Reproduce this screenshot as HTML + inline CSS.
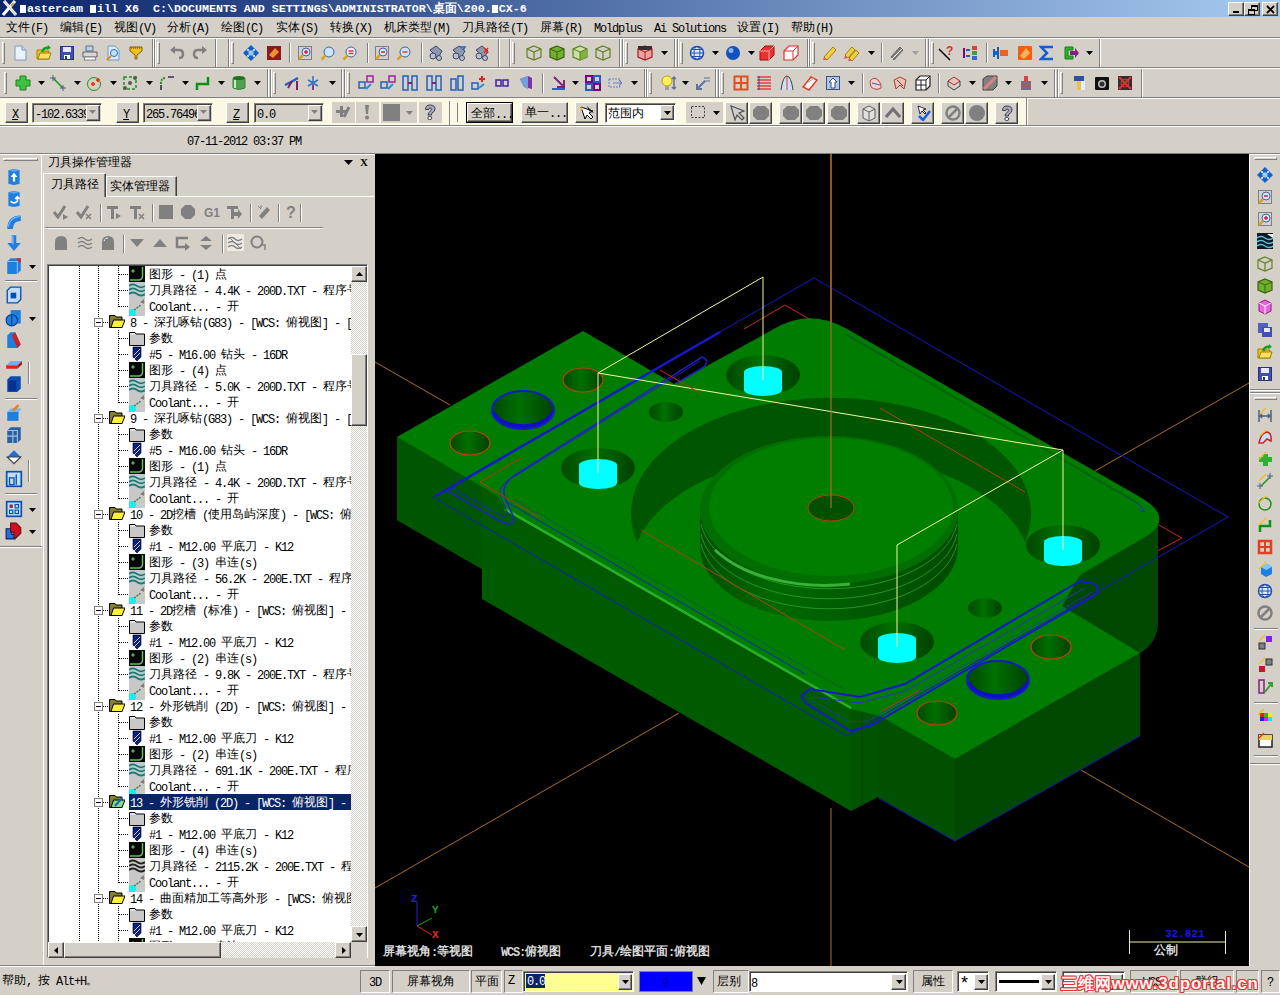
<!DOCTYPE html><html><head><meta charset="utf-8"><style>
*{margin:0;padding:0;box-sizing:border-box}
html,body{width:1280px;height:996px;overflow:hidden}
body{background:#D4D0C8;position:relative;font-family:"Liberation Sans",sans-serif;font-size:12px;color:#000}
.a{position:absolute}
.t{white-space:nowrap;line-height:16px;height:16px;font-size:12px}
.t .m{font-family:"Liberation Mono",monospace;font-size:12px;letter-spacing:-1.2px;position:relative;top:1px}
.t .c{font-family:"Liberation Sans",sans-serif;font-size:12px;letter-spacing:0}
.u{text-decoration:underline}
.tt{color:#fff;font:bold 11.67px/16px "Liberation Mono",monospace;white-space:nowrap}
.tt .c{font-size:12px;font-family:"Liberation Sans",sans-serif}
.mn{line-height:16px}
.ph{}
.vt{color:#D8D8D8;font-weight:bold}
.vtb{font:bold 11px/12px "Liberation Mono",monospace}
.wm{font:bold 17px/18px "Liberation Sans",sans-serif;color:#FFF4F4;letter-spacing:0.8px;white-space:nowrap;text-shadow:1px 0 #E03838,-1px 0 #E03838,0 1px #E03838,0 -1px #E03838,1px 1px #E03838,-1px -1px #E03838,1px -1px #E03838,-1px 1px #E03838}
</style></head><body><div class="a" style="left:0px;top:0px;width:1280px;height:17px;background:linear-gradient(to right,#0A246A,#A6CAF0)"></div><svg class="a" style="left:2px;top:0px;" width="16" height="16" viewBox="0 0 16 16"><path d="M2 1L14 15M13 1L1 15" stroke="#fff" stroke-width="3"/><path d="M2 1L14 15" stroke="#C0C0C0" stroke-width="1"/><path d="M9 6L12 3" stroke="#C0A040" stroke-width="2"/></svg><div class="a tt" style="left:20px;top:0px"><span style="display:inline-block;width:6px;height:8px;background:#fff;margin-right:1px;vertical-align:-1px"></span>astercam <span style="display:inline-block;width:6px;height:8px;background:#fff;margin-right:1px;vertical-align:-1px"></span>ill X6&#160;&#160;C:\DOCUMENTS AND SETTINGS\ADMINISTRATOR\<span class="c">桌面</span>\200.<span style="display:inline-block;width:6px;height:8px;background:#fff;margin-right:1px;vertical-align:-1px"></span>CX-6</div><div class="a" style="left:1228px;top:2px;width:16px;height:14px;background:#D4D0C8;border-top:1px solid #fff;border-left:1px solid #fff;border-right:1px solid #404040;border-bottom:1px solid #404040;box-shadow:inset -1px -1px 0 #808080"><svg class="a" style="left:4px;top:8px;" width="7" height="3" viewBox="0 0 7 3"><rect width="6" height="2" fill="#000"/></svg></div><div class="a" style="left:1244px;top:2px;width:16px;height:14px;background:#D4D0C8;border-top:1px solid #fff;border-left:1px solid #fff;border-right:1px solid #404040;border-bottom:1px solid #404040;box-shadow:inset -1px -1px 0 #808080"><svg class="a" style="left:3px;top:2px;" width="10" height="10" viewBox="0 0 10 10"><rect x="3.5" y="0.5" width="6" height="5" fill="none" stroke="#000"/><rect x="3" y="0" width="7" height="2" fill="#000"/><rect x="0.5" y="4.5" width="6" height="5" fill="#D4D0C8" stroke="#000"/><rect x="0" y="4" width="7" height="2" fill="#000"/></svg></div><div class="a" style="left:1262px;top:2px;width:16px;height:14px;background:#D4D0C8;border-top:1px solid #fff;border-left:1px solid #fff;border-right:1px solid #404040;border-bottom:1px solid #404040;box-shadow:inset -1px -1px 0 #808080"><svg class="a" style="left:3px;top:2px;" width="9" height="9" viewBox="0 0 9 9"><path d="M1 1L8 8M8 1L1 8" stroke="#000" stroke-width="1.8"/></svg></div><div class="a t mn" style="left:6px;top:19px;"><span class="c">文件</span><span class="m">(F)</span></div><div class="a t mn" style="left:60px;top:19px;"><span class="c">编辑</span><span class="m">(E)</span></div><div class="a t mn" style="left:114px;top:19px;"><span class="c">视图</span><span class="m">(V)</span></div><div class="a t mn" style="left:167px;top:19px;"><span class="c">分析</span><span class="m">(A)</span></div><div class="a t mn" style="left:221px;top:19px;"><span class="c">绘图</span><span class="m">(C)</span></div><div class="a t mn" style="left:276px;top:19px;"><span class="c">实体</span><span class="m">(S)</span></div><div class="a t mn" style="left:330px;top:19px;"><span class="c">转换</span><span class="m">(X)</span></div><div class="a t mn" style="left:384px;top:19px;"><span class="c">机床类型</span><span class="m">(M)</span></div><div class="a t mn" style="left:462px;top:19px;"><span class="c">刀具路径</span><span class="m">(T)</span></div><div class="a t mn" style="left:540px;top:19px;"><span class="c">屏幕</span><span class="m">(R)</span></div><div class="a t mn" style="left:594px;top:19px;"><span class="m">Moldplus</span></div><div class="a t mn" style="left:654px;top:19px;"><span class="m">Ai&#160;Solutions</span></div><div class="a t mn" style="left:737px;top:19px;"><span class="c">设置</span><span class="m">(I)</span></div><div class="a t mn" style="left:791px;top:19px;"><span class="c">帮助</span><span class="m">(H)</span></div><div class="a" style="left:0px;top:37px;width:1280px;height:1px;background:#808080"></div><div class="a" style="left:0px;top:38px;width:1280px;height:1px;background:#fff"></div><div class="a" style="left:0px;top:67px;width:1280px;height:1px;background:#808080"></div><div class="a" style="left:0px;top:68px;width:1280px;height:1px;background:#fff"></div><div class="a" style="left:0px;top:97px;width:1280px;height:1px;background:#808080"></div><div class="a" style="left:0px;top:98px;width:1280px;height:1px;background:#fff"></div><div class="a" style="left:152px;top:39px;width:1px;height:28px;background:#808080"></div><div class="a" style="left:153px;top:39px;width:1px;height:28px;background:#fff"></div><div class="a" style="left:2px;top:42px;width:3px;height:22px;border-left:1px solid #fff;border-top:1px solid #fff;border-right:1px solid #808080;border-bottom:1px solid #808080"></div><div class="a" style="left:215px;top:39px;width:1px;height:28px;background:#808080"></div><div class="a" style="left:216px;top:39px;width:1px;height:28px;background:#fff"></div><div class="a" style="left:154px;top:39px;width:1px;height:28px;background:#808080"></div><div class="a" style="left:155px;top:39px;width:1px;height:28px;background:#fff"></div><div class="a" style="left:157px;top:42px;width:3px;height:22px;border-left:1px solid #fff;border-top:1px solid #fff;border-right:1px solid #808080;border-bottom:1px solid #808080"></div><div class="a" style="left:498px;top:39px;width:1px;height:28px;background:#808080"></div><div class="a" style="left:499px;top:39px;width:1px;height:28px;background:#fff"></div><div class="a" style="left:228px;top:39px;width:1px;height:28px;background:#808080"></div><div class="a" style="left:229px;top:39px;width:1px;height:28px;background:#fff"></div><div class="a" style="left:231px;top:42px;width:3px;height:22px;border-left:1px solid #fff;border-top:1px solid #fff;border-right:1px solid #808080;border-bottom:1px solid #808080"></div><div class="a" style="left:619px;top:39px;width:1px;height:28px;background:#808080"></div><div class="a" style="left:620px;top:39px;width:1px;height:28px;background:#fff"></div><div class="a" style="left:509px;top:39px;width:1px;height:28px;background:#808080"></div><div class="a" style="left:510px;top:39px;width:1px;height:28px;background:#fff"></div><div class="a" style="left:512px;top:42px;width:3px;height:22px;border-left:1px solid #fff;border-top:1px solid #fff;border-right:1px solid #808080;border-bottom:1px solid #808080"></div><div class="a" style="left:674px;top:39px;width:1px;height:28px;background:#808080"></div><div class="a" style="left:675px;top:39px;width:1px;height:28px;background:#fff"></div><div class="a" style="left:622px;top:39px;width:1px;height:28px;background:#808080"></div><div class="a" style="left:623px;top:39px;width:1px;height:28px;background:#fff"></div><div class="a" style="left:625px;top:42px;width:3px;height:22px;border-left:1px solid #fff;border-top:1px solid #fff;border-right:1px solid #808080;border-bottom:1px solid #808080"></div><div class="a" style="left:807px;top:39px;width:1px;height:28px;background:#808080"></div><div class="a" style="left:808px;top:39px;width:1px;height:28px;background:#fff"></div><div class="a" style="left:677px;top:39px;width:1px;height:28px;background:#808080"></div><div class="a" style="left:678px;top:39px;width:1px;height:28px;background:#fff"></div><div class="a" style="left:680px;top:42px;width:3px;height:22px;border-left:1px solid #fff;border-top:1px solid #fff;border-right:1px solid #808080;border-bottom:1px solid #808080"></div><div class="a" style="left:925px;top:39px;width:1px;height:28px;background:#808080"></div><div class="a" style="left:926px;top:39px;width:1px;height:28px;background:#fff"></div><div class="a" style="left:809px;top:39px;width:1px;height:28px;background:#808080"></div><div class="a" style="left:810px;top:39px;width:1px;height:28px;background:#fff"></div><div class="a" style="left:812px;top:42px;width:3px;height:22px;border-left:1px solid #fff;border-top:1px solid #fff;border-right:1px solid #808080;border-bottom:1px solid #808080"></div><div class="a" style="left:1099px;top:39px;width:1px;height:28px;background:#808080"></div><div class="a" style="left:1100px;top:39px;width:1px;height:28px;background:#fff"></div><div class="a" style="left:928px;top:39px;width:1px;height:28px;background:#808080"></div><div class="a" style="left:929px;top:39px;width:1px;height:28px;background:#fff"></div><div class="a" style="left:931px;top:42px;width:3px;height:22px;border-left:1px solid #fff;border-top:1px solid #fff;border-right:1px solid #808080;border-bottom:1px solid #808080"></div><div class="a" style="left:215px;top:39px;width:1px;height:28px;background:#808080"></div><div class="a" style="left:216px;top:39px;width:1px;height:28px;background:#fff"></div><div class="a" style="left:267px;top:69px;width:1px;height:28px;background:#808080"></div><div class="a" style="left:268px;top:69px;width:1px;height:28px;background:#fff"></div><div class="a" style="left:4px;top:72px;width:3px;height:22px;border-left:1px solid #fff;border-top:1px solid #fff;border-right:1px solid #808080;border-bottom:1px solid #808080"></div><div class="a" style="left:341px;top:69px;width:1px;height:28px;background:#808080"></div><div class="a" style="left:342px;top:69px;width:1px;height:28px;background:#fff"></div><div class="a" style="left:270px;top:69px;width:1px;height:28px;background:#808080"></div><div class="a" style="left:271px;top:69px;width:1px;height:28px;background:#fff"></div><div class="a" style="left:273px;top:72px;width:3px;height:22px;border-left:1px solid #fff;border-top:1px solid #fff;border-right:1px solid #808080;border-bottom:1px solid #808080"></div><div class="a" style="left:644px;top:69px;width:1px;height:28px;background:#808080"></div><div class="a" style="left:645px;top:69px;width:1px;height:28px;background:#fff"></div><div class="a" style="left:344px;top:69px;width:1px;height:28px;background:#808080"></div><div class="a" style="left:345px;top:69px;width:1px;height:28px;background:#fff"></div><div class="a" style="left:347px;top:72px;width:3px;height:22px;border-left:1px solid #fff;border-top:1px solid #fff;border-right:1px solid #808080;border-bottom:1px solid #808080"></div><div class="a" style="left:715px;top:69px;width:1px;height:28px;background:#808080"></div><div class="a" style="left:716px;top:69px;width:1px;height:28px;background:#fff"></div><div class="a" style="left:646px;top:69px;width:1px;height:28px;background:#808080"></div><div class="a" style="left:647px;top:69px;width:1px;height:28px;background:#fff"></div><div class="a" style="left:649px;top:72px;width:3px;height:22px;border-left:1px solid #fff;border-top:1px solid #fff;border-right:1px solid #808080;border-bottom:1px solid #808080"></div><div class="a" style="left:1054px;top:69px;width:1px;height:28px;background:#808080"></div><div class="a" style="left:1055px;top:69px;width:1px;height:28px;background:#fff"></div><div class="a" style="left:718px;top:69px;width:1px;height:28px;background:#808080"></div><div class="a" style="left:719px;top:69px;width:1px;height:28px;background:#fff"></div><div class="a" style="left:721px;top:72px;width:3px;height:22px;border-left:1px solid #fff;border-top:1px solid #fff;border-right:1px solid #808080;border-bottom:1px solid #808080"></div><div class="a" style="left:1141px;top:69px;width:1px;height:28px;background:#808080"></div><div class="a" style="left:1142px;top:69px;width:1px;height:28px;background:#fff"></div><div class="a" style="left:1057px;top:69px;width:1px;height:28px;background:#808080"></div><div class="a" style="left:1058px;top:69px;width:1px;height:28px;background:#fff"></div><div class="a" style="left:1060px;top:72px;width:3px;height:22px;border-left:1px solid #fff;border-top:1px solid #fff;border-right:1px solid #808080;border-bottom:1px solid #808080"></div><div class="a" style="left:289px;top:43px;width:1px;height:20px;background:#808080"></div><div class="a" style="left:290px;top:43px;width:1px;height:20px;background:#fff"></div><div class="a" style="left:367px;top:43px;width:1px;height:20px;background:#808080"></div><div class="a" style="left:368px;top:43px;width:1px;height:20px;background:#fff"></div><div class="a" style="left:421px;top:43px;width:1px;height:20px;background:#808080"></div><div class="a" style="left:422px;top:43px;width:1px;height:20px;background:#fff"></div><div class="a" style="left:881px;top:43px;width:1px;height:20px;background:#808080"></div><div class="a" style="left:882px;top:43px;width:1px;height:20px;background:#fff"></div><div class="a" style="left:986px;top:43px;width:1px;height:20px;background:#808080"></div><div class="a" style="left:987px;top:43px;width:1px;height:20px;background:#fff"></div><div class="a" style="left:542px;top:73px;width:1px;height:20px;background:#808080"></div><div class="a" style="left:543px;top:73px;width:1px;height:20px;background:#fff"></div><div class="a" style="left:862px;top:73px;width:1px;height:20px;background:#808080"></div><div class="a" style="left:863px;top:73px;width:1px;height:20px;background:#fff"></div><div class="a" style="left:938px;top:73px;width:1px;height:20px;background:#808080"></div><div class="a" style="left:939px;top:73px;width:1px;height:20px;background:#fff"></div><svg class="a" style="left:12px;top:45px" width="16" height="16" viewBox="0 0 16 16"><path d="M3 1H10L14 5V15H3Z" fill="#EAF2FF" stroke="#7A98C8"/><path d="M10 1V5H14" fill="#C8D8F0" stroke="#7A98C8"/></svg><svg class="a" style="left:36px;top:45px" width="16" height="16" viewBox="0 0 16 16"><path d="M1 5H6L7 6H13V14H1Z" fill="#F0C020" stroke="#A08000"/><path d="M2 14L4 8H15L13 14Z" fill="#FFE060" stroke="#A08000"/><path d="M6 7Q8 2 13 3" stroke="#10A020" stroke-width="2.5" fill="none"/><path d="M12 0L15 3L11 5Z" fill="#10A020"/></svg><svg class="a" style="left:59px;top:45px" width="16" height="16" viewBox="0 0 16 16"><rect x="1.5" y="1.5" width="13" height="13" fill="#4050B0" stroke="#283080"/><rect x="4" y="2" width="8" height="5" fill="#E8E8F8"/><rect x="5" y="10" width="6" height="4" fill="#fff"/><rect x="6" y="11" width="2" height="3" fill="#283080"/></svg><svg class="a" style="left:82px;top:45px" width="16" height="16" viewBox="0 0 16 16"><path d="M4 1H11V6H4Z" fill="#B8D0E8" stroke="#607080"/><path d="M1 7H15V12H1Z" fill="#D8D8D8" stroke="#606060"/><path d="M3 12H13L14 15H2Z" fill="#fff" stroke="#808080"/></svg><svg class="a" style="left:105px;top:45px" width="16" height="16" viewBox="0 0 16 16"><path d="M3 1H10L14 5V15H3Z" fill="#D8E8FF" stroke="#7A98C8"/><circle cx="9" cy="8" r="3.5" fill="#C0E0FF" stroke="#3070B0"/><path d="M6 11L2 15" stroke="#D09020" stroke-width="2"/></svg><svg class="a" style="left:128px;top:45px" width="16" height="16" viewBox="0 0 16 16"><path d="M2 2H14V6L9 10V14H7V10L2 6Z" fill="#F0C020" stroke="#806000"/><path d="M3 3H13" stroke="#604000" stroke-dasharray="1 1"/></svg><svg class="a" style="left:169px;top:45px" width="16" height="16" viewBox="0 0 16 16"><path d="M4 5H10Q14 5 14 9Q14 13 10 13" stroke="#808080" stroke-width="2.5" fill="none"/><path d="M1 5L6 1V9Z" fill="#808080"/></svg><svg class="a" style="left:192px;top:45px" width="16" height="16" viewBox="0 0 16 16"><path d="M12 5H6Q2 5 2 9Q2 13 6 13" stroke="#808080" stroke-width="2.5" fill="none"/><path d="M15 5L10 1V9Z" fill="#808080"/></svg><svg class="a" style="left:243px;top:45px" width="16" height="16" viewBox="0 0 16 16"><path d="M8 0L12 4H10V6H12V4L16 8L12 12V10H10V12H12L8 16L4 12H6V10H4V12L0 8L4 4V6H6V4H4Z" fill="#1060D0"/><rect x="5.5" y="5.5" width="5" height="5" fill="#A0C8F0"/></svg><svg class="a" style="left:266px;top:45px" width="16" height="16" viewBox="0 0 16 16"><rect x="1" y="1" width="14" height="14" fill="#8B1A1A"/><path d="M3 10L9 3L13 7L7 13Z" fill="#F09030"/></svg><svg class="a" style="left:297px;top:45px" width="16" height="16" viewBox="0 0 16 16"><rect x="1.5" y="1.5" width="13" height="13" fill="none" stroke="#203060" stroke-dasharray="1 1"/><circle cx="9" cy="7" r="4" fill="#D0E8FF" stroke="#4060A0"/><path d="M7 7H11M9 5V9" stroke="#E02020" stroke-width="1.5"/><path d="M6 10L2 14" stroke="#E0A020" stroke-width="2.5"/></svg><svg class="a" style="left:320px;top:45px" width="16" height="16" viewBox="0 0 16 16"><circle cx="9" cy="7" r="5" fill="#C8E4FF" stroke="#4060A0"/><path d="M5.5 10.5L1.5 14.5" stroke="#E0A020" stroke-width="2.5"/></svg><svg class="a" style="left:342px;top:45px" width="16" height="16" viewBox="0 0 16 16"><circle cx="9" cy="7" r="5" fill="#E8F0FF" stroke="#4060A0"/><path d="M6.5 6H11.5M6.5 8.5H11.5" stroke="#E04020" stroke-width="1.5"/><path d="M5.5 10.5L1.5 14.5" stroke="#E0A020" stroke-width="2.5"/></svg><svg class="a" style="left:374px;top:45px" width="16" height="16" viewBox="0 0 16 16"><rect x="1.5" y="1.5" width="13" height="13" fill="none" stroke="#203060" stroke-dasharray="1 1"/><circle cx="9" cy="7" r="4" fill="#D0E8FF" stroke="#4060A0"/><path d="M7 7H11" stroke="#E02020" stroke-width="1.5"/><path d="M6 10L2 14" stroke="#E0A020" stroke-width="2.5"/></svg><svg class="a" style="left:396px;top:45px" width="16" height="16" viewBox="0 0 16 16"><circle cx="9" cy="7" r="5" fill="#C8E4FF" stroke="#4060A0"/><path d="M6.5 7H11.5" stroke="#E04020" stroke-width="1.5"/><path d="M5.5 10.5L1.5 14.5" stroke="#E0A020" stroke-width="2.5"/></svg><svg class="a" style="left:428px;top:45px" width="16" height="16" viewBox="0 0 16 16"><path d="M2 5L8 1L14 6L10 13Z" fill="#9098B0" stroke="#404860"/><circle cx="5" cy="11" r="3" fill="#B8C0D8" stroke="#404860"/><circle cx="11" cy="13" r="2.5" fill="#B8C0D8" stroke="#404860"/></svg><svg class="a" style="left:451px;top:45px" width="16" height="16" viewBox="0 0 16 16"><path d="M2 5L8 1L14 6L10 13Z" fill="#9098B0" stroke="#404860"/><circle cx="5" cy="11" r="3" fill="#B8C0D8" stroke="#404860"/><circle cx="11" cy="13" r="2.5" fill="#B8C0D8" stroke="#404860"/><path d="M9 2L14 2L12 5" stroke="#3060C0" fill="none" stroke-width="1.5"/></svg><svg class="a" style="left:474px;top:45px" width="16" height="16" viewBox="0 0 16 16"><path d="M2 5L8 1L14 6L10 13Z" fill="#9098B0" stroke="#404860"/><circle cx="5" cy="11" r="3" fill="#B8C0D8" stroke="#404860"/><circle cx="11" cy="13" r="2.5" fill="#B8C0D8" stroke="#404860"/><path d="M10 3L14 8M14 3L10 8" stroke="#E03020" stroke-width="1.5"/></svg><svg class="a" style="left:526px;top:45px" width="16" height="16" viewBox="0 0 16 16"><path d="M8 1L15 4V12L8 15L1 12V4Z" fill="none" stroke="#608020" stroke-width="1.2"/><path d="M1 4L8 7L15 4M8 7V15" stroke="#608020" fill="none" stroke-width="1.2"/></svg><svg class="a" style="left:549px;top:45px" width="16" height="16" viewBox="0 0 16 16"><path d="M8 1L15 4V12L8 15L1 12V4Z" fill="#70B030" stroke="#406010" stroke-width="1.2"/><path d="M1 4L8 7L15 4M8 7V15" stroke="#406010" fill="none"/></svg><svg class="a" style="left:572px;top:45px" width="16" height="16" viewBox="0 0 16 16"><path d="M8 1L15 4V12L8 15L1 12V4Z" fill="#C8E0A0" stroke="#608020" stroke-width="1.2"/><path d="M8 7L15 4V12L8 15Z" fill="#80B040"/><path d="M1 4L8 7L15 4M8 7V15" stroke="#608020" fill="none"/></svg><svg class="a" style="left:595px;top:45px" width="16" height="16" viewBox="0 0 16 16"><path d="M8 1L15 4V12L8 15L1 12V4Z" fill="none" stroke="#608020" stroke-width="1.2"/><path d="M1 4L8 7L15 4M8 7V15" stroke="#608020" fill="none" stroke-width="1.2"/></svg><svg class="a" style="left:637px;top:45px" width="16" height="16" viewBox="0 0 16 16"><path d="M8 1L15 4V12L8 15L1 12V4Z" fill="#F0A0A0" stroke="#A02020" stroke-width="1.2"/><path d="M1 1H15V5H1Z" fill="#303030"/><path d="M1 4L8 7L15 4M8 7V15" stroke="#A02020" fill="none"/></svg><svg class="a" style="left:689px;top:45px" width="16" height="16" viewBox="0 0 16 16"><circle cx="8" cy="8" r="6.5" fill="#E0ECFF" stroke="#2050B0" stroke-width="1.5"/><ellipse cx="8" cy="8" rx="3" ry="6.5" fill="none" stroke="#2050B0"/><path d="M1.5 8H14.5M3 4.5H13M3 11.5H13" stroke="#2050B0"/></svg><svg class="a" style="left:725px;top:45px" width="16" height="16" viewBox="0 0 16 16"><circle cx="8" cy="8" r="7" fill="#1050C0"/><circle cx="6" cy="5.5" r="2.5" fill="#80B8F0"/></svg><svg class="a" style="left:759px;top:45px" width="16" height="16" viewBox="0 0 16 16"><path d="M1 6L6 1H15V10L10 15H1Z" fill="#F03030" stroke="#A01010"/><path d="M1 6H10V15M10 6L15 1" stroke="#FFB0B0" fill="none"/></svg><svg class="a" style="left:783px;top:45px" width="16" height="16" viewBox="0 0 16 16"><path d="M1 6L6 1H15V10L10 15H1Z" fill="#fff" stroke="#E03030" stroke-width="1.2"/><path d="M1 6H10V15M10 6L15 1" stroke="#E03030" fill="none"/></svg><svg class="a" style="left:822px;top:45px" width="16" height="16" viewBox="0 0 16 16"><path d="M2 12L11 2L14 5L5 15Z" fill="#F0D040" stroke="#A08010"/><path d="M2 12L5 15L1 15Z" fill="#E06060"/></svg><svg class="a" style="left:844px;top:45px" width="16" height="16" viewBox="0 0 16 16"><path d="M1 10L8 2L11 5L4 13Z" fill="#F0D040" stroke="#A08010"/><path d="M5 13L12 5L15 8L8 16Z" fill="#F0D040" stroke="#A08010"/><path d="M1 10L4 13L0 14ZM5 13L8 16L4 16Z" fill="#E06060"/></svg><svg class="a" style="left:889px;top:45px" width="16" height="16" viewBox="0 0 16 16"><path d="M2 12L11 2L14 5L5 15Z" fill="#808080" stroke="#606060"/><path d="M3 14L14 3" stroke="#fff"/></svg><svg class="a" style="left:938px;top:45px" width="16" height="16" viewBox="0 0 16 16"><path d="M1 4L12 15" stroke="#000" stroke-width="1.5"/><text x="8" y="10" font-size="12" font-weight="bold" fill="#E03020" font-family="Liberation Sans">?</text></svg><svg class="a" style="left:963px;top:45px" width="16" height="16" viewBox="0 0 16 16"><path d="M1 3V13" stroke="#800080" stroke-width="2"/><path d="M3 5H7M3 11H7" stroke="#2060C0" stroke-width="2"/><rect x="9" y="1" width="5" height="4" fill="#E04040"/><rect x="9" y="6" width="5" height="4" fill="#40A040"/><rect x="9" y="11" width="5" height="4" fill="#4060E0"/></svg><svg class="a" style="left:993px;top:45px" width="16" height="16" viewBox="0 0 16 16"><path d="M1 4V12M5 2V14" stroke="#1060C0" stroke-width="2"/><rect x="7" y="5" width="8" height="6" fill="#F06020"/><circle cx="3" cy="8" r="2" fill="#1060C0"/></svg><svg class="a" style="left:1017px;top:45px" width="16" height="16" viewBox="0 0 16 16"><rect x="1" y="1" width="14" height="14" fill="#F06010" rx="1"/><path d="M3 11L9 3L13 8L7 14Z" fill="#FFB060"/></svg><svg class="a" style="left:1039px;top:45px" width="16" height="16" viewBox="0 0 16 16"><path d="M14 2H2L8 8L2 14H14" stroke="#1060D0" stroke-width="2.5" fill="none"/></svg><svg class="a" style="left:1063px;top:45px" width="16" height="16" viewBox="0 0 16 16"><path d="M2 2H10V5H5V11H10V14H2Z" fill="#30B030" stroke="#108010"/><path d="M7 6H12V3L16 8L12 13V10H7Z" fill="#802080"/></svg><svg class="a" style="left:661px;top:51px;" width="7" height="4" viewBox="0 0 7 4"><path d="M0 0H7L3.5 4Z" fill="#000"/></svg><svg class="a" style="left:712px;top:51px;" width="7" height="4" viewBox="0 0 7 4"><path d="M0 0H7L3.5 4Z" fill="#000"/></svg><svg class="a" style="left:748px;top:51px;" width="7" height="4" viewBox="0 0 7 4"><path d="M0 0H7L3.5 4Z" fill="#000"/></svg><svg class="a" style="left:868px;top:51px;" width="7" height="4" viewBox="0 0 7 4"><path d="M0 0H7L3.5 4Z" fill="#000"/></svg><svg class="a" style="left:1086px;top:51px;" width="7" height="4" viewBox="0 0 7 4"><path d="M0 0H7L3.5 4Z" fill="#000"/></svg><svg class="a" style="left:912px;top:51px;" width="7" height="4" viewBox="0 0 7 4"><path d="M0 0H7L3.5 4Z" fill="#A0A0A0"/></svg><svg class="a" style="left:15px;top:75px" width="16" height="16" viewBox="0 0 16 16"><path d="M5 1H11V5H15V11H11V15H5V11H1V5H5Z" fill="#40C040" stroke="#208020"/></svg><svg class="a" style="left:50px;top:75px" width="16" height="16" viewBox="0 0 16 16"><path d="M3 3L13 13" stroke="#209020" stroke-width="1.5"/><path d="M0 3H6M3 0V6M10 13H16M13 10V16" stroke="#506080"/></svg><svg class="a" style="left:86px;top:75px" width="16" height="16" viewBox="0 0 16 16"><circle cx="8" cy="9" r="6.5" fill="none" stroke="#209020"/><path d="M5 9H9M7 7V11M10 5H14M12 3V7" stroke="#F04010" stroke-width="2"/></svg><svg class="a" style="left:122px;top:75px" width="16" height="16" viewBox="0 0 16 16"><rect x="2" y="2" width="12" height="12" fill="none" stroke="#209020" stroke-width="1.5" stroke-dasharray="3 2"/><circle cx="8" cy="8" r="2" fill="#506050"/><circle cx="13" cy="3" r="2" fill="#506050"/><circle cx="3" cy="13" r="2" fill="#506050"/></svg><svg class="a" style="left:159px;top:75px" width="16" height="16" viewBox="0 0 16 16"><path d="M2 15V8Q2 3 7 3" stroke="#209020" stroke-width="2" stroke-dasharray="2 1" fill="none"/><path d="M9 2H15" stroke="#605080" stroke-width="2"/><path d="M2 10V15" stroke="#505060" stroke-width="2"/></svg><svg class="a" style="left:195px;top:75px" width="16" height="16" viewBox="0 0 16 16"><path d="M2 15V9H13V2" stroke="#109010" stroke-width="2.5" fill="none"/></svg><svg class="a" style="left:231px;top:75px" width="16" height="16" viewBox="0 0 16 16"><path d="M2 3V13Q8 16 14 13V3" fill="#50A050" stroke="#408040"/><ellipse cx="8" cy="3" rx="6" ry="2" fill="#207020"/><path d="M4 5V13" stroke="#C0F0C0" stroke-width="2"/></svg><svg class="a" style="left:284px;top:75px" width="16" height="16" viewBox="0 0 16 16"><path d="M1 10L7 7L14 3" stroke="#2060C0" stroke-width="2.5"/><path d="M4 13L8 6M13 6V15" stroke="#802060" stroke-width="2"/></svg><svg class="a" style="left:305px;top:75px" width="16" height="16" viewBox="0 0 16 16"><path d="M8 1V15M3 5L13 11M13 5L3 11" stroke="#3070D0" stroke-width="1.5"/><path d="M8 10V15" stroke="#A03080" stroke-width="2"/></svg><svg class="a" style="left:358px;top:75px" width="16" height="16" viewBox="0 0 16 16"><rect x="1" y="7" width="6" height="6" fill="none" stroke="#2060C0" stroke-width="1.5"/><rect x="9" y="1" width="6" height="6" fill="none" stroke="#A020A0" stroke-width="1.5"/><path d="M8 14L13 9" stroke="#2090E0" stroke-width="2"/></svg><svg class="a" style="left:380px;top:75px" width="16" height="16" viewBox="0 0 16 16"><rect x="1" y="7" width="6" height="6" fill="none" stroke="#2060C0" stroke-width="1.5"/><rect x="9" y="1" width="6" height="6" fill="none" stroke="#A020A0" stroke-width="1.5"/><path d="M8 14L13 9" stroke="#2090E0" stroke-width="2"/></svg><svg class="a" style="left:402px;top:75px" width="16" height="16" viewBox="0 0 16 16"><rect x="1" y="1" width="5" height="14" fill="none" stroke="#2060C0" stroke-width="1.5"/><rect x="10" y="1" width="5" height="14" fill="none" stroke="#2060C0" stroke-width="1.5"/><path d="M6 8H10" stroke="#802080" stroke-width="2"/></svg><svg class="a" style="left:426px;top:75px" width="16" height="16" viewBox="0 0 16 16"><rect x="1" y="1" width="5" height="14" fill="none" stroke="#2060C0" stroke-width="1.5"/><rect x="10" y="1" width="5" height="14" fill="none" stroke="#2060C0" stroke-width="1.5"/><path d="M6 8H10" stroke="#802080" stroke-width="2"/></svg><svg class="a" style="left:449px;top:75px" width="16" height="16" viewBox="0 0 16 16"><rect x="2" y="4" width="5" height="11" fill="none" stroke="#2060C0" stroke-width="1.5"/><rect x="9" y="1" width="5" height="14" fill="none" stroke="#2060C0" stroke-width="1.5"/></svg><svg class="a" style="left:471px;top:75px" width="16" height="16" viewBox="0 0 16 16"><rect x="1" y="8" width="6" height="6" fill="none" stroke="#2060C0" stroke-width="1.5"/><path d="M11 1V7M8 4H14" stroke="#E02020" stroke-width="2"/><path d="M8 13L13 9" stroke="#2090E0" stroke-width="2"/></svg><svg class="a" style="left:494px;top:75px" width="16" height="16" viewBox="0 0 16 16"><rect x="2" y="5" width="5" height="6" fill="none" stroke="#4020A0" stroke-width="1.5"/><rect x="9" y="5" width="5" height="6" fill="none" stroke="#4020A0" stroke-width="1.5"/></svg><svg class="a" style="left:518px;top:75px" width="16" height="16" viewBox="0 0 16 16"><path d="M2 4L10 1L14 3V14L6 12Z" fill="#8030A0"/><path d="M2 4L10 1L10 14L6 12Z" fill="#70A0E0"/></svg><svg class="a" style="left:551px;top:75px" width="16" height="16" viewBox="0 0 16 16"><path d="M3 2L13 12M13 5V12H6" stroke="#802080" stroke-width="2" fill="none"/><path d="M1 14H14" stroke="#3060C0" stroke-width="2"/></svg><svg class="a" style="left:585px;top:75px" width="16" height="16" viewBox="0 0 16 16"><rect x="1" y="1" width="6" height="6" fill="none" stroke="#800080" stroke-width="2"/><rect x="9" y="1" width="6" height="6" fill="none" stroke="#2060C0" stroke-width="2"/><rect x="1" y="9" width="6" height="6" fill="none" stroke="#2060C0" stroke-width="2"/><rect x="9" y="9" width="6" height="6" fill="none" stroke="#800080" stroke-width="2"/></svg><svg class="a" style="left:608px;top:75px" width="16" height="16" viewBox="0 0 16 16"><rect x="1" y="4" width="11" height="8" fill="none" stroke="#6080C0" stroke-dasharray="2 1"/><path d="M5 8H14M11 5L14 8L11 11" stroke="#6080C0" fill="none"/></svg><svg class="a" style="left:661px;top:75px" width="16" height="16" viewBox="0 0 16 16"><circle cx="6" cy="6" r="5" fill="#FFF060" stroke="#C0A000"/><rect x="4" y="11" width="4" height="4" fill="#A0A0A0"/><path d="M13 2V14M11 4L13 2L15 4M11 12L13 14L15 12" stroke="#6070A0" fill="none" stroke-width="1.5"/></svg><svg class="a" style="left:695px;top:75px" width="16" height="16" viewBox="0 0 16 16"><path d="M9 3H15M9 6H15" stroke="#6070A0"/><path d="M2 14L10 6M2 9V14H7" stroke="#6070A0" stroke-width="2" fill="none"/></svg><svg class="a" style="left:733px;top:75px" width="16" height="16" viewBox="0 0 16 16"><rect x="1.5" y="1.5" width="13" height="13" fill="none" stroke="#E05020" stroke-width="2"/><path d="M8 1V15M1 8H15" stroke="#E05020" stroke-width="2"/></svg><svg class="a" style="left:756px;top:75px" width="16" height="16" viewBox="0 0 16 16"><path d="M1 2H15M1 5H15M1 8H15M1 11H15M1 14H15" stroke="#E04040" stroke-width="1.5"/><path d="M3 1V15" stroke="#4040A0"/></svg><svg class="a" style="left:779px;top:75px" width="16" height="16" viewBox="0 0 16 16"><path d="M2 15Q4 1 8 1Q12 1 14 15" fill="#C8E0F8" stroke="#404040"/><path d="M8 1V15" stroke="#E04020"/></svg><svg class="a" style="left:802px;top:75px" width="16" height="16" viewBox="0 0 16 16"><path d="M1 12L9 2L15 5L7 15Z" fill="#F8F8F8" stroke="#E04020" stroke-width="1.5"/><path d="M4 9L12 3" stroke="#A0B0C0"/></svg><svg class="a" style="left:825px;top:75px" width="16" height="16" viewBox="0 0 16 16"><rect x="1.5" y="1.5" width="13" height="13" fill="#B0C8E8" stroke="#405080"/><path d="M8 3L12 7H10V13H6V7H4Z" fill="#fff" stroke="#405080"/></svg><svg class="a" style="left:868px;top:75px" width="16" height="16" viewBox="0 0 16 16"><path d="M2 6Q6 1 10 5Q14 9 13 13Q8 16 3 12Z" fill="#F0D0D0" stroke="#C04040"/><path d="M4 8L12 10" stroke="#4060A0"/></svg><svg class="a" style="left:892px;top:75px" width="16" height="16" viewBox="0 0 16 16"><path d="M2 5L8 2L14 5L12 14L8 10L4 14Z" fill="#F0C0B0" stroke="#A04030"/><path d="M5 5L11 11" stroke="#404080"/></svg><svg class="a" style="left:915px;top:75px" width="16" height="16" viewBox="0 0 16 16"><path d="M1 5L5 1H15V11L11 15H1Z" fill="#fff" stroke="#202020" stroke-width="1.2"/><path d="M1 5H11V15M11 5L15 1M6 5V15M1 10H11" stroke="#202020" fill="none"/></svg><svg class="a" style="left:946px;top:75px" width="16" height="16" viewBox="0 0 16 16"><path d="M2 6L8 2L14 6L8 10Z" fill="#F0C0C0" stroke="#A03030"/><path d="M2 6V11L8 15L14 11V6" fill="none" stroke="#404040"/></svg><svg class="a" style="left:982px;top:75px" width="16" height="16" viewBox="0 0 16 16"><path d="M1 4L5 1H15V11L11 15H1Z" fill="#808080" stroke="#404040"/><path d="M2 14L14 2" stroke="#E08080" stroke-width="3"/></svg><svg class="a" style="left:1018px;top:75px" width="16" height="16" viewBox="0 0 16 16"><rect x="6" y="1" width="4" height="5" fill="#E04040"/><rect x="3" y="6" width="10" height="9" fill="#707080"/><path d="M3 9H13M3 12H13" stroke="#E04040"/></svg><svg class="a" style="left:1071px;top:75px" width="16" height="16" viewBox="0 0 16 16"><rect x="3" y="1" width="10" height="5" fill="#3050A0"/><rect x="6" y="6" width="4" height="9" fill="#F0C040"/><rect x="10" y="6" width="4" height="9" fill="#E0F0FF"/></svg><svg class="a" style="left:1094px;top:75px" width="16" height="16" viewBox="0 0 16 16"><rect x="1" y="2" width="14" height="13" fill="#101010" rx="1"/><circle cx="8" cy="9" r="4" fill="#C0C0C0"/><circle cx="8" cy="9" r="2.5" fill="#303030"/></svg><svg class="a" style="left:1117px;top:75px" width="16" height="16" viewBox="0 0 16 16"><rect x="1" y="1" width="14" height="14" fill="#303030"/><path d="M2 2L14 14M14 2L2 14" stroke="#E03030" stroke-width="2"/><circle cx="8" cy="8" r="4" fill="none" stroke="#E03030"/></svg><svg class="a" style="left:38px;top:81px;" width="7" height="4" viewBox="0 0 7 4"><path d="M0 0H7L3.5 4Z" fill="#000"/></svg><svg class="a" style="left:74px;top:81px;" width="7" height="4" viewBox="0 0 7 4"><path d="M0 0H7L3.5 4Z" fill="#000"/></svg><svg class="a" style="left:110px;top:81px;" width="7" height="4" viewBox="0 0 7 4"><path d="M0 0H7L3.5 4Z" fill="#000"/></svg><svg class="a" style="left:146px;top:81px;" width="7" height="4" viewBox="0 0 7 4"><path d="M0 0H7L3.5 4Z" fill="#000"/></svg><svg class="a" style="left:182px;top:81px;" width="7" height="4" viewBox="0 0 7 4"><path d="M0 0H7L3.5 4Z" fill="#000"/></svg><svg class="a" style="left:218px;top:81px;" width="7" height="4" viewBox="0 0 7 4"><path d="M0 0H7L3.5 4Z" fill="#000"/></svg><svg class="a" style="left:254px;top:81px;" width="7" height="4" viewBox="0 0 7 4"><path d="M0 0H7L3.5 4Z" fill="#000"/></svg><svg class="a" style="left:329px;top:81px;" width="7" height="4" viewBox="0 0 7 4"><path d="M0 0H7L3.5 4Z" fill="#000"/></svg><svg class="a" style="left:572px;top:81px;" width="7" height="4" viewBox="0 0 7 4"><path d="M0 0H7L3.5 4Z" fill="#000"/></svg><svg class="a" style="left:631px;top:81px;" width="7" height="4" viewBox="0 0 7 4"><path d="M0 0H7L3.5 4Z" fill="#000"/></svg><svg class="a" style="left:682px;top:81px;" width="7" height="4" viewBox="0 0 7 4"><path d="M0 0H7L3.5 4Z" fill="#000"/></svg><svg class="a" style="left:848px;top:81px;" width="7" height="4" viewBox="0 0 7 4"><path d="M0 0H7L3.5 4Z" fill="#000"/></svg><svg class="a" style="left:969px;top:81px;" width="7" height="4" viewBox="0 0 7 4"><path d="M0 0H7L3.5 4Z" fill="#000"/></svg><svg class="a" style="left:1005px;top:81px;" width="7" height="4" viewBox="0 0 7 4"><path d="M0 0H7L3.5 4Z" fill="#000"/></svg><svg class="a" style="left:1041px;top:81px;" width="7" height="4" viewBox="0 0 7 4"><path d="M0 0H7L3.5 4Z" fill="#000"/></svg><div class="a" style="left:0px;top:98px;width:1026px;height:28px;background:#FBF9E3"></div><div class="a" style="left:0px;top:125px;width:1280px;height:1px;background:#808080"></div><div class="a" style="left:0px;top:126px;width:1280px;height:1px;background:#fff"></div><div class="a" style="left:1026px;top:98px;width:1px;height:27px;background:#808080"></div><div class="a" style="left:1027px;top:98px;width:1px;height:27px;background:#fff"></div><div class="a" style="left:5px;top:102px;width:23px;height:21px;background:#D4D0C8;border-top:1px solid #fff;border-left:1px solid #fff;border-right:1px solid #404040;border-bottom:1px solid #404040;box-shadow:inset -1px -1px 0 #808080"><div class="a t" style="left:6px;top:2px"><span class="m u">X</span></div></div><div class="a" style="left:32px;top:103px;width:70px;height:20px;background:#D4D0C8;border-top:1px solid #808080;border-left:1px solid #808080;border-right:1px solid #fff;border-bottom:1px solid #fff;box-shadow:inset 1px 1px 0 #404040"><div class="a t" style="left:2px;top:1px;width:52px;overflow:hidden;white-space:nowrap"><span class="m">-102.6339</span></div></div><div class="a" style="left:86px;top:105px;width:14px;height:16px;background:#D4D0C8;border-top:1px solid #fff;border-left:1px solid #fff;border-right:1px solid #404040;border-bottom:1px solid #404040;box-shadow:inset -1px -1px 0 #808080"><svg class="a" style="left:2px;top:4px;" width="7" height="4" viewBox="0 0 7 4"><path d="M0 0H7L3.5 4Z" fill="#808080"/></svg></div><div class="a" style="left:116px;top:102px;width:23px;height:21px;background:#D4D0C8;border-top:1px solid #fff;border-left:1px solid #fff;border-right:1px solid #404040;border-bottom:1px solid #404040;box-shadow:inset -1px -1px 0 #808080"><div class="a t" style="left:6px;top:2px"><span class="m u">Y</span></div></div><div class="a" style="left:143px;top:103px;width:70px;height:20px;background:#D4D0C8;border-top:1px solid #808080;border-left:1px solid #808080;border-right:1px solid #fff;border-bottom:1px solid #fff;box-shadow:inset 1px 1px 0 #404040"><div class="a t" style="left:2px;top:1px;width:52px;overflow:hidden;white-space:nowrap"><span class="m">265.76496</span></div></div><div class="a" style="left:197px;top:105px;width:14px;height:16px;background:#D4D0C8;border-top:1px solid #fff;border-left:1px solid #fff;border-right:1px solid #404040;border-bottom:1px solid #404040;box-shadow:inset -1px -1px 0 #808080"><svg class="a" style="left:2px;top:4px;" width="7" height="4" viewBox="0 0 7 4"><path d="M0 0H7L3.5 4Z" fill="#808080"/></svg></div><div class="a" style="left:226px;top:102px;width:23px;height:21px;background:#D4D0C8;border-top:1px solid #fff;border-left:1px solid #fff;border-right:1px solid #404040;border-bottom:1px solid #404040;box-shadow:inset -1px -1px 0 #808080"><div class="a t" style="left:6px;top:2px"><span class="m u">Z</span></div></div><div class="a" style="left:254px;top:103px;width:70px;height:20px;background:#D4D0C8;border-top:1px solid #808080;border-left:1px solid #808080;border-right:1px solid #fff;border-bottom:1px solid #fff;box-shadow:inset 1px 1px 0 #404040"><div class="a t" style="left:2px;top:1px;width:52px;overflow:hidden;white-space:nowrap"><span class="m">0.0</span></div></div><div class="a" style="left:308px;top:105px;width:14px;height:16px;background:#D4D0C8;border-top:1px solid #fff;border-left:1px solid #fff;border-right:1px solid #404040;border-bottom:1px solid #404040;box-shadow:inset -1px -1px 0 #808080"><svg class="a" style="left:2px;top:4px;" width="7" height="4" viewBox="0 0 7 4"><path d="M0 0H7L3.5 4Z" fill="#808080"/></svg></div><div class="a" style="left:332px;top:102px;width:23px;height:21px;background:#D4D0C8"></div><svg class="a" style="left:335px;top:104px" width="16" height="16" viewBox="0 0 16 16"><path d="M1 6H5V2H8V6H11V9H8V13H5V9H1Z" fill="#808080"/><path d="M9 13L14 3" stroke="#808080" stroke-width="3"/></svg><div class="a" style="left:356px;top:102px;width:23px;height:21px;background:#D4D0C8"></div><svg class="a" style="left:359px;top:104px" width="16" height="16" viewBox="0 0 16 16"><path d="M6 1H10L9 10H7Z" fill="#808080"/><circle cx="8" cy="13.5" r="2" fill="#808080"/></svg><div class="a" style="left:419px;top:102px;width:23px;height:21px;background:#D4D0C8"></div><svg class="a" style="left:422px;top:104px" width="16" height="16" viewBox="0 0 16 16"><path d="M3.5 5.5Q3.5 1 8 1Q13 1 13 5Q13 7.5 10 9Q9.5 9.5 9.5 11H6Q6 8.5 8 7.5Q9.5 6.5 9.5 5.2Q9.5 4 8 4Q6.8 4 6.8 5.5Z" fill="#A8A8C0" stroke="#303040" stroke-width="0.9"/><ellipse cx="7.8" cy="14" rx="2" ry="1.6" fill="#fff" stroke="#303040" stroke-width="0.9"/></svg><div class="a" style="left:381px;top:102px;width:21px;height:21px;background:#D4D0C8"></div><div class="a" style="left:383px;top:104px;width:17px;height:17px;background:#808080"></div><div class="a" style="left:402px;top:102px;width:15px;height:21px;background:#D4D0C8"></div><svg class="a" style="left:406px;top:111px;" width="7" height="4" viewBox="0 0 7 4"><path d="M0 0H7L3.5 4Z" fill="#808080"/></svg><div class="a" style="left:449px;top:101px;width:1px;height:24px;background:#808080"></div><div class="a" style="left:450px;top:101px;width:1px;height:24px;background:#fff"></div><div class="a" style="left:457px;top:103px;width:1px;height:19px;background:#808080"></div><div class="a" style="left:466px;top:102px;width:47px;height:21px;border:1px solid #000"><div class="a" style="left:0px;top:0px;width:45px;height:19px;background:#D4D0C8;border-top:1px solid #fff;border-left:1px solid #fff;border-right:1px solid #404040;border-bottom:1px solid #404040;box-shadow:inset -1px -1px 0 #808080"><div class="a t" style="left:3px;top:1px;"><span class="c">全部</span><span class="m">...</span></div></div></div><div class="a" style="left:521px;top:102px;width:47px;height:21px;background:#D4D0C8;border-top:1px solid #fff;border-left:1px solid #fff;border-right:1px solid #404040;border-bottom:1px solid #404040;box-shadow:inset -1px -1px 0 #808080"><div class="a t" style="left:3px;top:1px;"><span class="c">单一</span><span class="m">...</span></div></div><div class="a" style="left:575px;top:102px;width:23px;height:21px;background:#D4D0C8;border-top:1px solid #fff;border-left:1px solid #fff;border-right:1px solid #404040;border-bottom:1px solid #404040;box-shadow:inset -1px -1px 0 #808080"><svg class="a" style="left:3px;top:2px" width="16" height="16" viewBox="0 0 16 16"><path d="M2 2L6 14L8 10L12 14L14 12L10 8L14 6Z" fill="#fff" stroke="#000"/><path d="M8 1L15 8L10 6Z" fill="#202020"/><path d="M3 1L1 6L4 4Z" fill="#F0C020"/></svg></div><div class="a" style="left:605px;top:103px;width:71px;height:20px;background:#fff;border-top:1px solid #808080;border-left:1px solid #808080;border-right:1px solid #fff;border-bottom:1px solid #fff;box-shadow:inset 1px 1px 0 #404040"><div class="a t" style="left:2px;top:1px;"><span class="c">范围内</span></div><div class="a" style="left:54px;top:1px;width:14px;height:15px;background:#D4D0C8;border-top:1px solid #fff;border-left:1px solid #fff;border-right:1px solid #404040;border-bottom:1px solid #404040;box-shadow:inset -1px -1px 0 #808080"><svg class="a" style="left:3px;top:5px;" width="7" height="4" viewBox="0 0 7 4"><path d="M0 0H7L3.5 4Z" fill="#000"/></svg></div></div><div class="a" style="left:686px;top:102px;width:37px;height:21px;background:#D4D0C8"></div><svg class="a" style="left:690px;top:104px" width="16" height="16" viewBox="0 0 16 16"><rect x="1.5" y="2.5" width="13" height="11" fill="none" stroke="#404040" stroke-dasharray="2 1.5"/></svg><svg class="a" style="left:713px;top:111px;" width="7" height="4" viewBox="0 0 7 4"><path d="M0 0H7L3.5 4Z" fill="#000"/></svg><div class="a" style="left:725px;top:102px;width:23px;height:22px;background:#D4D0C8;border-top:1px solid #fff;border-left:1px solid #fff;border-right:1px solid #404040;border-bottom:1px solid #404040;box-shadow:inset -1px -1px 0 #808080"><svg class="a" style="left:3px;top:2px" width="16" height="16" viewBox="0 0 16 16"><path d="M2 1L6 15L8 10L13 15L15 13L10 8L15 6Z" fill="#D0D0D0" stroke="#505050" stroke-width="1.2"/></svg></div><div class="a" style="left:749px;top:102px;width:23px;height:22px;background:#D4D0C8;border-top:1px solid #fff;border-left:1px solid #fff;border-right:1px solid #404040;border-bottom:1px solid #404040;box-shadow:inset -1px -1px 0 #808080"><svg class="a" style="left:3px;top:2px" width="16" height="16" viewBox="0 0 16 16"><path d="M4 1H12L16 5V11L12 15H4L0 11V5Z" fill="#808080"/></svg></div><div class="a" style="left:779px;top:102px;width:23px;height:22px;background:#D4D0C8;border-top:1px solid #fff;border-left:1px solid #fff;border-right:1px solid #404040;border-bottom:1px solid #404040;box-shadow:inset -1px -1px 0 #808080"><svg class="a" style="left:3px;top:2px" width="16" height="16" viewBox="0 0 16 16"><path d="M4 1H12L16 5V11L12 15H4L0 11V5Z" fill="#808080"/></svg></div><div class="a" style="left:802px;top:102px;width:23px;height:22px;background:#D4D0C8;border-top:1px solid #fff;border-left:1px solid #fff;border-right:1px solid #404040;border-bottom:1px solid #404040;box-shadow:inset -1px -1px 0 #808080"><svg class="a" style="left:3px;top:2px" width="16" height="16" viewBox="0 0 16 16"><path d="M4 1H12L16 5V11L12 15H4L0 11V5Z" fill="#808080"/></svg></div><div class="a" style="left:827px;top:102px;width:23px;height:22px;background:#D4D0C8;border-top:1px solid #fff;border-left:1px solid #fff;border-right:1px solid #404040;border-bottom:1px solid #404040;box-shadow:inset -1px -1px 0 #808080"><svg class="a" style="left:3px;top:2px" width="16" height="16" viewBox="0 0 16 16"><path d="M4 1H12L16 5V11L12 15H4L0 11V5Z" fill="#808080"/></svg></div><div class="a" style="left:857px;top:102px;width:23px;height:22px;background:#D4D0C8;border-top:1px solid #fff;border-left:1px solid #fff;border-right:1px solid #404040;border-bottom:1px solid #404040;box-shadow:inset -1px -1px 0 #808080"><svg class="a" style="left:3px;top:2px" width="16" height="16" viewBox="0 0 16 16"><path d="M2 4L8 1L14 4V13L8 16L2 13Z" fill="#E0E0E0" stroke="#606060"/><path d="M8 7V16M2 4L8 7L14 4" stroke="#606060" fill="none"/></svg></div><div class="a" style="left:881px;top:102px;width:23px;height:22px;background:#D4D0C8;border-top:1px solid #fff;border-left:1px solid #fff;border-right:1px solid #404040;border-bottom:1px solid #404040;box-shadow:inset -1px -1px 0 #808080"><svg class="a" style="left:3px;top:2px" width="16" height="16" viewBox="0 0 16 16"><path d="M1 12L8 4L15 12" stroke="#707070" stroke-width="3" fill="none"/></svg></div><div class="a" style="left:911px;top:102px;width:23px;height:22px;background:#D4D0C8;border-top:1px solid #fff;border-left:1px solid #fff;border-right:1px solid #404040;border-bottom:1px solid #404040;box-shadow:inset -1px -1px 0 #808080"><svg class="a" style="left:3px;top:2px" width="16" height="16" viewBox="0 0 16 16"><path d="M3 1L5 9L7 6L10 9L11 8L8 5L11 4Z" fill="#fff" stroke="#000" stroke-width="0.8"/><path d="M4 11L8 15L15 6" stroke="#2060E0" stroke-width="2.5" fill="none"/></svg></div><div class="a" style="left:941px;top:102px;width:23px;height:22px;background:#D4D0C8;border-top:1px solid #fff;border-left:1px solid #fff;border-right:1px solid #404040;border-bottom:1px solid #404040;box-shadow:inset -1px -1px 0 #808080"><svg class="a" style="left:3px;top:2px" width="16" height="16" viewBox="0 0 16 16"><circle cx="8" cy="8" r="6.5" fill="none" stroke="#808080" stroke-width="2.5"/><path d="M4 12L12 4" stroke="#808080" stroke-width="2.5"/></svg></div><div class="a" style="left:965px;top:102px;width:23px;height:22px;background:#D4D0C8;border-top:1px solid #fff;border-left:1px solid #fff;border-right:1px solid #404040;border-bottom:1px solid #404040;box-shadow:inset -1px -1px 0 #808080"><svg class="a" style="left:3px;top:2px" width="16" height="16" viewBox="0 0 16 16"><circle cx="8" cy="8" r="8" fill="#808080"/></svg></div><div class="a" style="left:995px;top:102px;width:23px;height:22px;background:#D4D0C8;border-top:1px solid #fff;border-left:1px solid #fff;border-right:1px solid #404040;border-bottom:1px solid #404040;box-shadow:inset -1px -1px 0 #808080"><svg class="a" style="left:3px;top:2px" width="16" height="16" viewBox="0 0 16 16"><path d="M3.5 5.5Q3.5 1 8 1Q13 1 13 5Q13 7.5 10 9Q9.5 9.5 9.5 11H6Q6 8.5 8 7.5Q9.5 6.5 9.5 5.2Q9.5 4 8 4Q6.8 4 6.8 5.5Z" fill="#A8A8C0" stroke="#303040" stroke-width="0.9"/><ellipse cx="7.8" cy="14" rx="2" ry="1.6" fill="#fff" stroke="#303040" stroke-width="0.9"/></svg></div><div class="a t" style="left:187px;top:132px;"><span class="m">07-11-2012&#160;03:37&#160;PM</span></div><div class="a" style="left:0px;top:153px;width:1280px;height:1px;background:#808080"></div><div class="a" style="left:0px;top:154px;width:1280px;height:1px;background:#fff"></div><div class="a" style="left:0px;top:155px;width:42px;height:392px;border-right:1px solid #fff"></div><div class="a" style="left:3px;top:158px;width:35px;height:3px;border-left:1px solid #fff;border-top:1px solid #fff;border-right:1px solid #808080;border-bottom:1px solid #808080"></div><div class="a" style="left:0px;top:546px;width:42px;height:1px;background:#808080"></div><div class="a" style="left:0px;top:547px;width:42px;height:1px;background:#fff"></div><svg class="a" style="left:5px;top:168px" width="18" height="18" viewBox="0 0 16 16"><path d="M3 2Q8 0 13 2V14Q8 16 3 14Z" fill="#1F7FE0"/><path d="M3 2Q8 4 13 2" fill="#70B8FF"/><path d="M8 4L11 8H9V12H7V8H5Z" fill="#fff"/></svg><svg class="a" style="left:5px;top:190px" width="18" height="18" viewBox="0 0 16 16"><path d="M3 2Q8 0 13 2V14Q8 16 3 14Z" fill="#1F7FE0"/><path d="M3 2Q8 4 13 2" fill="#70B8FF"/><path d="M5 10Q8 13 11 10L11 7M9 8L11 6L13 8" stroke="#fff" stroke-width="1.5" fill="none"/></svg><svg class="a" style="left:5px;top:212px" width="18" height="18" viewBox="0 0 16 16"><path d="M2 15Q2 3 14 3V8Q7 8 7 15Z" fill="#1F7FE0"/><path d="M3 13Q4 5 13 4" stroke="#80C0FF" fill="none"/></svg><svg class="a" style="left:5px;top:234px" width="18" height="18" viewBox="0 0 16 16"><path d="M6 1H10V8H14L8 15L2 8H6Z" fill="#1F7FE0"/><path d="M7 2V9" stroke="#A0D0FF"/></svg><svg class="a" style="left:5px;top:257px" width="18" height="18" viewBox="0 0 16 16"><path d="M2 4L5 1H14V12L11 15H2Z" fill="#1F7FE0"/><path d="M10 1H14V6Z" fill="#E02020"/><path d="M2 4H11V15" stroke="#80C0FF" fill="none"/></svg><svg class="a" style="left:5px;top:286px" width="18" height="18" viewBox="0 0 16 16"><path d="M2 4L5 1H14V12L11 15H2Z" fill="#C0DCFF" stroke="#0A4FB0" stroke-width="1.2"/><rect x="5" y="6" width="5" height="5" fill="#0A4FB0"/></svg><svg class="a" style="left:5px;top:309px" width="18" height="18" viewBox="0 0 16 16"><path d="M5 1H14V13H5Z" fill="#1F7FE0"/><circle cx="6" cy="10" r="5" fill="#1F7FE0" stroke="#0A3F90"/><path d="M6 5V15" stroke="#0A3F90"/></svg><svg class="a" style="left:5px;top:331px" width="18" height="18" viewBox="0 0 16 16"><path d="M2 4L5 1H9L14 12L11 15H2Z" fill="#1F7FE0"/><path d="M9 1L14 12L11 15L6 4Z" fill="#D02020"/></svg><svg class="a" style="left:5px;top:353px" width="18" height="18" viewBox="0 0 16 16"><path d="M1 11L5 7H15L11 11Z" fill="#70B0F0"/><path d="M1 11H11V14H1Z" fill="#E02020"/><path d="M11 11L15 7V10L11 14Z" fill="#A01010"/></svg><svg class="a" style="left:5px;top:375px" width="18" height="18" viewBox="0 0 16 16"><path d="M2 4L5 1H14V12L11 15H2Z" fill="#0A4FB0"/><rect x="3" y="5" width="7" height="9" fill="#0A2F90"/></svg><svg class="a" style="left:5px;top:404px" width="18" height="18" viewBox="0 0 16 16"><path d="M2 7H12V15H2Z" fill="#1F7FE0"/><path d="M2 7L5 4H15L12 7Z" fill="#70B8FF"/><path d="M7 6L12 1" stroke="#F08020" stroke-width="2.5"/></svg><svg class="a" style="left:5px;top:426px" width="18" height="18" viewBox="0 0 16 16"><path d="M2 4L5 1H14V12L11 15H2Z" fill="#2860A0"/><path d="M2 9H11M7 4V15M2 4H11V15" stroke="#A0C0E0" fill="none"/></svg><svg class="a" style="left:5px;top:448px" width="18" height="18" viewBox="0 0 16 16"><path d="M2 8L8 2L14 8L8 14Z" fill="#2070D0"/><path d="M2 8L8 14L14 8Z" fill="#fff" stroke="#404040"/></svg><svg class="a" style="left:5px;top:470px" width="18" height="18" viewBox="0 0 16 16"><rect x="1.5" y="1.5" width="13" height="13" fill="#C0DCFF" stroke="#0A4FB0" stroke-width="1.5"/><path d="M4 7H8V13H4ZM10 4V13" stroke="#0A4FB0" fill="none" stroke-width="1.2"/></svg><svg class="a" style="left:5px;top:500px" width="18" height="18" viewBox="0 0 16 16"><rect x="1.5" y="1.5" width="13" height="13" fill="#C0DCFF" stroke="#0A4FB0" stroke-width="1.5"/><rect x="4" y="4" width="3" height="3" fill="#903030"/><rect x="9" y="4" width="3" height="3" fill="none" stroke="#0A4FB0"/><rect x="4" y="9" width="3" height="3" fill="none" stroke="#0A4FB0"/><rect x="9" y="9" width="3" height="3" fill="none" stroke="#0A4FB0"/></svg><svg class="a" style="left:5px;top:522px" width="18" height="18" viewBox="0 0 16 16"><path d="M1 6H6V11H9V15H1Z" fill="#2070E0" stroke="#102060"/><path d="M5 1H10L14 5V10L10 14H8V9H5Z" fill="#D01020" stroke="#601010"/></svg><svg class="a" style="left:29px;top:265px;" width="7" height="4" viewBox="0 0 7 4"><path d="M0 0H7L3.5 4Z" fill="#000"/></svg><svg class="a" style="left:29px;top:317px;" width="7" height="4" viewBox="0 0 7 4"><path d="M0 0H7L3.5 4Z" fill="#000"/></svg><svg class="a" style="left:29px;top:508px;" width="7" height="4" viewBox="0 0 7 4"><path d="M0 0H7L3.5 4Z" fill="#000"/></svg><svg class="a" style="left:29px;top:530px;" width="7" height="4" viewBox="0 0 7 4"><path d="M0 0H7L3.5 4Z" fill="#000"/></svg><div class="a" style="left:5px;top:280px;width:32px;height:1px;background:#808080"></div><div class="a" style="left:5px;top:281px;width:32px;height:1px;background:#fff"></div><div class="a" style="left:5px;top:398px;width:32px;height:1px;background:#808080"></div><div class="a" style="left:5px;top:399px;width:32px;height:1px;background:#fff"></div><div class="a" style="left:5px;top:493px;width:32px;height:1px;background:#808080"></div><div class="a" style="left:5px;top:494px;width:32px;height:1px;background:#fff"></div><div class="a" style="left:28px;top:362px;width:1px;height:22px;background:#808080"></div><div class="a" style="left:29px;top:362px;width:1px;height:22px;background:#fff"></div><div class="a" style="left:28px;top:460px;width:1px;height:22px;background:#808080"></div><div class="a" style="left:29px;top:460px;width:1px;height:22px;background:#fff"></div><div class="a t ph" style="left:48px;top:154px;"><span class="c">刀具操作管理器</span></div><svg class="a" style="left:344px;top:160px;" width="9" height="5" viewBox="0 0 9 5"><path d="M0 0H9L4.5 5Z" fill="#000"/></svg><div class="a" style="left:360px;top:156px;font:bold 11px/12px 'Liberation Serif'">X</div><div class="a" style="left:43px;top:196px;width:331px;height:769px;border-top:1px solid #fff;border-left:1px solid #fff"></div><div class="a" style="left:106px;top:176px;width:71px;height:20px;border-top:1px solid #fff;border-left:1px solid #fff;border-right:1px solid #404040;box-shadow:inset -1px 0 0 #808080;background:#D4D0C8"></div><div class="a t" style="left:110px;top:178px;"><span class="c">实体管理器</span></div><div class="a" style="left:43px;top:173px;width:63px;height:24px;border-top:1px solid #fff;border-left:1px solid #fff;border-right:1px solid #404040;box-shadow:inset -1px 0 0 #808080;background:#D4D0C8"></div><div class="a t" style="left:51px;top:176px;"><span class="c">刀具路径</span></div><div class="a" style="left:45px;top:227px;width:278px;height:1px;background:#808080"></div><div class="a" style="left:45px;top:228px;width:278px;height:1px;background:#fff"></div><svg class="a" style="left:53px;top:204px" width="16" height="16" viewBox="0 0 16 16"><path d="M1 8L5 13L12 2" stroke="#808080" stroke-width="3" fill="none"/><path d="M10 10L15 13L10 16Z" fill="#808080"/></svg><svg class="a" style="left:76px;top:204px" width="16" height="16" viewBox="0 0 16 16"><path d="M1 8L5 13L12 2" stroke="#808080" stroke-width="3" fill="none"/><path d="M10 10L15 15M15 10L10 15" stroke="#808080" stroke-width="1.5"/></svg><svg class="a" style="left:106px;top:204px" width="16" height="16" viewBox="0 0 16 16"><path d="M1 2H12V5H8V15H5V5H1Z" fill="#808080"/><path d="M10 9L15 12L10 15Z" fill="#808080"/></svg><svg class="a" style="left:129px;top:204px" width="16" height="16" viewBox="0 0 16 16"><path d="M1 2H12V5H8V15H5V5H1Z" fill="#808080"/><path d="M10 10L15 15M15 10L10 15" stroke="#808080" stroke-width="1.5"/></svg><svg class="a" style="left:158px;top:204px" width="16" height="16" viewBox="0 0 16 16"><rect x="1" y="1" width="14" height="14" fill="#808080"/></svg><svg class="a" style="left:180px;top:204px" width="16" height="16" viewBox="0 0 16 16"><path d="M5 1H11L15 5V11L11 15H5L1 11V5Z" fill="#808080"/></svg><svg class="a" style="left:204px;top:204px" width="16" height="16" viewBox="0 0 16 16"><text x="0" y="13" font-size="12" font-weight="bold" fill="#808080" font-family="Liberation Sans">G1</text></svg><svg class="a" style="left:226px;top:204px" width="16" height="16" viewBox="0 0 16 16"><path d="M1 2H12V5H8V15H5V5H1Z" fill="#808080"/><path d="M8 8H12V5L16 10L12 15V12H8Z" fill="#808080"/></svg><svg class="a" style="left:256px;top:204px" width="16" height="16" viewBox="0 0 16 16"><path d="M3 12L11 3L14 6L6 15Z" fill="#808080"/><path d="M2 2L5 5M5 1V4" stroke="#808080"/></svg><svg class="a" style="left:284px;top:204px" width="16" height="16" viewBox="0 0 16 16"><text x="2" y="14" font-size="16" font-weight="bold" fill="#808080" font-family="Liberation Sans">?</text></svg><div class="a" style="left:100px;top:204px;width:1px;height:18px;background:#808080"></div><div class="a" style="left:101px;top:204px;width:1px;height:18px;background:#fff"></div><div class="a" style="left:152px;top:204px;width:1px;height:18px;background:#808080"></div><div class="a" style="left:153px;top:204px;width:1px;height:18px;background:#fff"></div><div class="a" style="left:250px;top:204px;width:1px;height:18px;background:#808080"></div><div class="a" style="left:251px;top:204px;width:1px;height:18px;background:#fff"></div><div class="a" style="left:278px;top:204px;width:1px;height:18px;background:#808080"></div><div class="a" style="left:279px;top:204px;width:1px;height:18px;background:#fff"></div><div class="a" style="left:300px;top:204px;width:1px;height:18px;background:#808080"></div><div class="a" style="left:301px;top:204px;width:1px;height:18px;background:#fff"></div><div class="a" style="left:227px;top:234px;width:17px;height:17px;background:#ECEAE4"></div><svg class="a" style="left:53px;top:235px" width="16" height="16" viewBox="0 0 16 16"><path d="M2 15V7Q2 1 8 1Q14 1 14 7V15Z" fill="#808080"/></svg><svg class="a" style="left:77px;top:235px" width="16" height="16" viewBox="0 0 16 16"><path d="M1 4Q5 1 8 4T15 4M1 8Q5 5 8 8T15 8M1 12Q5 9 8 12T15 12" stroke="#808080" stroke-width="1.5" fill="none"/></svg><svg class="a" style="left:100px;top:235px" width="16" height="16" viewBox="0 0 16 16"><path d="M2 15V7Q2 1 8 1Q14 1 14 7V15Z" fill="#808080"/><path d="M4 6Q5 3 8 3" stroke="#fff"/></svg><svg class="a" style="left:129px;top:235px" width="16" height="16" viewBox="0 0 16 16"><path d="M1 4H15L8 12Z" fill="#808080"/></svg><svg class="a" style="left:152px;top:235px" width="16" height="16" viewBox="0 0 16 16"><path d="M1 12H15L8 4Z" fill="#808080"/></svg><svg class="a" style="left:175px;top:235px" width="16" height="16" viewBox="0 0 16 16"><path d="M13 3H2V12H10" stroke="#808080" stroke-width="2.5" fill="none"/><path d="M10 8L15 12L10 16Z" fill="#808080"/></svg><svg class="a" style="left:198px;top:235px" width="16" height="16" viewBox="0 0 16 16"><path d="M2 6H14L8 1ZM2 10H14L8 15Z" fill="#808080"/></svg><svg class="a" style="left:227px;top:235px" width="16" height="16" viewBox="0 0 16 16"><path d="M1 4Q5 1 8 4T15 4M1 8Q5 5 8 8T15 8M1 12Q5 9 8 12T15 12" stroke="#808080" stroke-width="1.5" fill="none"/><path d="M2 2L14 14" stroke="#808080"/></svg><svg class="a" style="left:250px;top:235px" width="16" height="16" viewBox="0 0 16 16"><circle cx="7" cy="7" r="5.5" fill="none" stroke="#808080" stroke-width="2"/><path d="M10 10H15V15" stroke="#808080" stroke-width="1.5" fill="none"/></svg><div class="a" style="left:123px;top:235px;width:1px;height:18px;background:#808080"></div><div class="a" style="left:124px;top:235px;width:1px;height:18px;background:#fff"></div><div class="a" style="left:222px;top:235px;width:1px;height:18px;background:#808080"></div><div class="a" style="left:223px;top:235px;width:1px;height:18px;background:#fff"></div><div class="a" style="left:47px;top:264px;width:321px;height:694px;background:#fff;border-top:1px solid #808080;border-left:1px solid #808080;border-right:1px solid #fff;border-bottom:1px solid #fff;box-shadow:inset 1px 1px 0 #404040"></div><div class="a" style="left:48px;top:266px;width:303px;height:676px;overflow:hidden"><div class="a" style="left:31px;top:0px;width:1px;height:676px;background-image:linear-gradient(#000 50%,transparent 50%);background-size:1px 2px"></div><div class="a" style="left:50px;top:0px;width:1px;height:676px;background-image:linear-gradient(#000 50%,transparent 50%);background-size:1px 2px"></div><div class="a" style="left:70px;top:0px;width:1px;height:16px;background-image:linear-gradient(#000 50%,transparent 50%);background-size:1px 2px"></div><div class="a" style="left:71px;top:8px;width:10px;height:1px;background-image:linear-gradient(to right,#000 50%,transparent 50%);background-size:2px 1px"></div><svg class="a" style="left:81px;top:0px" width="16" height="16" viewBox="0 0 16 16"><rect x="0" y="0" width="16" height="16" fill="#050505"/><path d="M13.5 1V10Q13.5 14 9.5 14H1" stroke="#60C060" stroke-width="1.5" fill="none"/><path d="M4 3L6 5L4 7L2 5Z" fill="#50B050"/></svg><div class="a t" style="left:101px;top:0px;"><span class="c">图形</span><span class="m">&#160;-&#160;(1)&#160;</span><span class="c">点</span></div><div class="a" style="left:70px;top:16px;width:1px;height:16px;background-image:linear-gradient(#000 50%,transparent 50%);background-size:1px 2px"></div><div class="a" style="left:71px;top:24px;width:10px;height:1px;background-image:linear-gradient(to right,#000 50%,transparent 50%);background-size:2px 1px"></div><svg class="a" style="left:81px;top:16px" width="16" height="16" viewBox="0 0 16 16"><rect x="0" y="0" width="16" height="16" fill="#C8C8C8"/><path d="M0 4Q4 1 8 4T16 4M0 8Q4 5 8 8T16 8M0 12Q4 9 8 12T16 12" stroke="#207878" stroke-width="2" fill="none"/><path d="M0 5.5Q4 2.5 8 5.5T16 5.5M0 9.5Q4 6.5 8 9.5T16 9.5" stroke="#A8D8D8" stroke-width="1" fill="none"/></svg><div class="a t" style="left:101px;top:16px;"><span class="c">刀具路径</span><span class="m">&#160;-&#160;4.4K&#160;-&#160;200D.TXT&#160;-&#160;</span><span class="c">程序号</span></div><div class="a" style="left:70px;top:32px;width:1px;height:9px;background-image:linear-gradient(#000 50%,transparent 50%);background-size:1px 2px"></div><div class="a" style="left:71px;top:40px;width:10px;height:1px;background-image:linear-gradient(to right,#000 50%,transparent 50%);background-size:2px 1px"></div><svg class="a" style="left:81px;top:32px" width="16" height="18" viewBox="0 0 16 18"><rect x="0" y="0" width="16" height="18" fill="#C8C8C8"/><circle cx="3" cy="15" r="4" fill="#10F0F0"/><path d="M5 12L12 7" stroke="#408040" stroke-width="1.5" stroke-dasharray="2 1"/><path d="M11 4L15 1V6Z" fill="#808080"/></svg><div class="a t" style="left:101px;top:32px;"><span class="m">Coolant...&#160;-&#160;</span><span class="c">开</span></div><div class="a" style="left:51px;top:56px;width:10px;height:1px;background-image:linear-gradient(to right,#000 50%,transparent 50%);background-size:2px 1px"></div><div class="a" style="left:46px;top:52px;width:9px;height:9px;background:#fff;border:1px solid #808080"><div class="a" style="left:1px;top:3px;width:5px;height:1px;background:#000"></div></div><svg class="a" style="left:61px;top:47px" width="16" height="16" viewBox="0 0 16 16"><path d="M0.5 2.5H6L7 4H13V14.5H0.5Z" fill="#808030" stroke="#000"/><path d="M2 14.5L4.5 7H16L13 14.5Z" fill="#FFF030" stroke="#000"/></svg><div class="a t" style="left:82px;top:48px;"><span class="m">8&#160;-&#160;</span><span class="c">深孔啄钻</span><span class="m">(G83)&#160;-&#160;[WCS:&#160;</span><span class="c">俯视图</span><span class="m">]&#160;-&#160;[</span><span class="c">刀具面</span><span class="m">:&#160;</span><span class="c">俯视图</span><span class="m">]</span></div><div class="a" style="left:70px;top:64px;width:1px;height:16px;background-image:linear-gradient(#000 50%,transparent 50%);background-size:1px 2px"></div><div class="a" style="left:71px;top:72px;width:10px;height:1px;background-image:linear-gradient(to right,#000 50%,transparent 50%);background-size:2px 1px"></div><svg class="a" style="left:81px;top:64px" width="16" height="16" viewBox="0 0 16 16"><path d="M0.5 2.5H6L7 4H15.5V15.5H0.5Z" fill="#C8C8C8" stroke="#000"/><path d="M1 4H6" stroke="#fff"/></svg><div class="a t" style="left:101px;top:64px;"><span class="c">参数</span></div><div class="a" style="left:70px;top:80px;width:1px;height:16px;background-image:linear-gradient(#000 50%,transparent 50%);background-size:1px 2px"></div><div class="a" style="left:71px;top:88px;width:10px;height:1px;background-image:linear-gradient(to right,#000 50%,transparent 50%);background-size:2px 1px"></div><svg class="a" style="left:81px;top:80px" width="16" height="16" viewBox="0 0 16 16"><path d="M4 1H12V11L8 15L4 11Z" fill="#102080" stroke="#000" stroke-width="0.6"/><path d="M5 9L11 3M5 13L11 7" stroke="#C0C8F0" stroke-width="1"/></svg><div class="a t" style="left:101px;top:80px;"><span class="m">#5&#160;-&#160;M16.00&#160;</span><span class="c">钻头</span><span class="m">&#160;-&#160;16DR</span></div><div class="a" style="left:70px;top:96px;width:1px;height:16px;background-image:linear-gradient(#000 50%,transparent 50%);background-size:1px 2px"></div><div class="a" style="left:71px;top:104px;width:10px;height:1px;background-image:linear-gradient(to right,#000 50%,transparent 50%);background-size:2px 1px"></div><svg class="a" style="left:81px;top:96px" width="16" height="16" viewBox="0 0 16 16"><rect x="0" y="0" width="16" height="16" fill="#050505"/><path d="M13.5 1V10Q13.5 14 9.5 14H1" stroke="#60C060" stroke-width="1.5" fill="none"/><path d="M4 3L6 5L4 7L2 5Z" fill="#50B050"/></svg><div class="a t" style="left:101px;top:96px;"><span class="c">图形</span><span class="m">&#160;-&#160;(4)&#160;</span><span class="c">点</span></div><div class="a" style="left:70px;top:112px;width:1px;height:16px;background-image:linear-gradient(#000 50%,transparent 50%);background-size:1px 2px"></div><div class="a" style="left:71px;top:120px;width:10px;height:1px;background-image:linear-gradient(to right,#000 50%,transparent 50%);background-size:2px 1px"></div><svg class="a" style="left:81px;top:112px" width="16" height="16" viewBox="0 0 16 16"><rect x="0" y="0" width="16" height="16" fill="#C8C8C8"/><path d="M0 4Q4 1 8 4T16 4M0 8Q4 5 8 8T16 8M0 12Q4 9 8 12T16 12" stroke="#207878" stroke-width="2" fill="none"/><path d="M0 5.5Q4 2.5 8 5.5T16 5.5M0 9.5Q4 6.5 8 9.5T16 9.5" stroke="#A8D8D8" stroke-width="1" fill="none"/></svg><div class="a t" style="left:101px;top:112px;"><span class="c">刀具路径</span><span class="m">&#160;-&#160;5.0K&#160;-&#160;200D.TXT&#160;-&#160;</span><span class="c">程序号</span></div><div class="a" style="left:70px;top:128px;width:1px;height:9px;background-image:linear-gradient(#000 50%,transparent 50%);background-size:1px 2px"></div><div class="a" style="left:71px;top:136px;width:10px;height:1px;background-image:linear-gradient(to right,#000 50%,transparent 50%);background-size:2px 1px"></div><svg class="a" style="left:81px;top:128px" width="16" height="18" viewBox="0 0 16 18"><rect x="0" y="0" width="16" height="18" fill="#C8C8C8"/><circle cx="3" cy="15" r="4" fill="#10F0F0"/><path d="M5 12L12 7" stroke="#408040" stroke-width="1.5" stroke-dasharray="2 1"/><path d="M11 4L15 1V6Z" fill="#808080"/></svg><div class="a t" style="left:101px;top:128px;"><span class="m">Coolant...&#160;-&#160;</span><span class="c">开</span></div><div class="a" style="left:51px;top:152px;width:10px;height:1px;background-image:linear-gradient(to right,#000 50%,transparent 50%);background-size:2px 1px"></div><div class="a" style="left:46px;top:148px;width:9px;height:9px;background:#fff;border:1px solid #808080"><div class="a" style="left:1px;top:3px;width:5px;height:1px;background:#000"></div></div><svg class="a" style="left:61px;top:143px" width="16" height="16" viewBox="0 0 16 16"><path d="M0.5 2.5H6L7 4H13V14.5H0.5Z" fill="#808030" stroke="#000"/><path d="M2 14.5L4.5 7H16L13 14.5Z" fill="#FFF030" stroke="#000"/></svg><div class="a t" style="left:82px;top:144px;"><span class="m">9&#160;-&#160;</span><span class="c">深孔啄钻</span><span class="m">(G83)&#160;-&#160;[WCS:&#160;</span><span class="c">俯视图</span><span class="m">]&#160;-&#160;[</span><span class="c">刀具面</span><span class="m">:&#160;</span><span class="c">俯视图</span><span class="m">]</span></div><div class="a" style="left:70px;top:160px;width:1px;height:16px;background-image:linear-gradient(#000 50%,transparent 50%);background-size:1px 2px"></div><div class="a" style="left:71px;top:168px;width:10px;height:1px;background-image:linear-gradient(to right,#000 50%,transparent 50%);background-size:2px 1px"></div><svg class="a" style="left:81px;top:160px" width="16" height="16" viewBox="0 0 16 16"><path d="M0.5 2.5H6L7 4H15.5V15.5H0.5Z" fill="#C8C8C8" stroke="#000"/><path d="M1 4H6" stroke="#fff"/></svg><div class="a t" style="left:101px;top:160px;"><span class="c">参数</span></div><div class="a" style="left:70px;top:176px;width:1px;height:16px;background-image:linear-gradient(#000 50%,transparent 50%);background-size:1px 2px"></div><div class="a" style="left:71px;top:184px;width:10px;height:1px;background-image:linear-gradient(to right,#000 50%,transparent 50%);background-size:2px 1px"></div><svg class="a" style="left:81px;top:176px" width="16" height="16" viewBox="0 0 16 16"><path d="M4 1H12V11L8 15L4 11Z" fill="#102080" stroke="#000" stroke-width="0.6"/><path d="M5 9L11 3M5 13L11 7" stroke="#C0C8F0" stroke-width="1"/></svg><div class="a t" style="left:101px;top:176px;"><span class="m">#5&#160;-&#160;M16.00&#160;</span><span class="c">钻头</span><span class="m">&#160;-&#160;16DR</span></div><div class="a" style="left:70px;top:192px;width:1px;height:16px;background-image:linear-gradient(#000 50%,transparent 50%);background-size:1px 2px"></div><div class="a" style="left:71px;top:200px;width:10px;height:1px;background-image:linear-gradient(to right,#000 50%,transparent 50%);background-size:2px 1px"></div><svg class="a" style="left:81px;top:192px" width="16" height="16" viewBox="0 0 16 16"><rect x="0" y="0" width="16" height="16" fill="#050505"/><path d="M13.5 1V10Q13.5 14 9.5 14H1" stroke="#60C060" stroke-width="1.5" fill="none"/><path d="M4 3L6 5L4 7L2 5Z" fill="#50B050"/></svg><div class="a t" style="left:101px;top:192px;"><span class="c">图形</span><span class="m">&#160;-&#160;(1)&#160;</span><span class="c">点</span></div><div class="a" style="left:70px;top:208px;width:1px;height:16px;background-image:linear-gradient(#000 50%,transparent 50%);background-size:1px 2px"></div><div class="a" style="left:71px;top:216px;width:10px;height:1px;background-image:linear-gradient(to right,#000 50%,transparent 50%);background-size:2px 1px"></div><svg class="a" style="left:81px;top:208px" width="16" height="16" viewBox="0 0 16 16"><rect x="0" y="0" width="16" height="16" fill="#C8C8C8"/><path d="M0 4Q4 1 8 4T16 4M0 8Q4 5 8 8T16 8M0 12Q4 9 8 12T16 12" stroke="#207878" stroke-width="2" fill="none"/><path d="M0 5.5Q4 2.5 8 5.5T16 5.5M0 9.5Q4 6.5 8 9.5T16 9.5" stroke="#A8D8D8" stroke-width="1" fill="none"/></svg><div class="a t" style="left:101px;top:208px;"><span class="c">刀具路径</span><span class="m">&#160;-&#160;4.4K&#160;-&#160;200D.TXT&#160;-&#160;</span><span class="c">程序号</span></div><div class="a" style="left:70px;top:224px;width:1px;height:9px;background-image:linear-gradient(#000 50%,transparent 50%);background-size:1px 2px"></div><div class="a" style="left:71px;top:232px;width:10px;height:1px;background-image:linear-gradient(to right,#000 50%,transparent 50%);background-size:2px 1px"></div><svg class="a" style="left:81px;top:224px" width="16" height="18" viewBox="0 0 16 18"><rect x="0" y="0" width="16" height="18" fill="#C8C8C8"/><circle cx="3" cy="15" r="4" fill="#10F0F0"/><path d="M5 12L12 7" stroke="#408040" stroke-width="1.5" stroke-dasharray="2 1"/><path d="M11 4L15 1V6Z" fill="#808080"/></svg><div class="a t" style="left:101px;top:224px;"><span class="m">Coolant...&#160;-&#160;</span><span class="c">开</span></div><div class="a" style="left:51px;top:248px;width:10px;height:1px;background-image:linear-gradient(to right,#000 50%,transparent 50%);background-size:2px 1px"></div><div class="a" style="left:46px;top:244px;width:9px;height:9px;background:#fff;border:1px solid #808080"><div class="a" style="left:1px;top:3px;width:5px;height:1px;background:#000"></div></div><svg class="a" style="left:61px;top:239px" width="16" height="16" viewBox="0 0 16 16"><path d="M0.5 2.5H6L7 4H13V14.5H0.5Z" fill="#808030" stroke="#000"/><path d="M2 14.5L4.5 7H16L13 14.5Z" fill="#FFF030" stroke="#000"/></svg><div class="a t" style="left:82px;top:240px;"><span class="m">10&#160;-&#160;2D</span><span class="c">挖槽</span><span class="m">&#160;(</span><span class="c">使用岛屿深度</span><span class="m">)&#160;-&#160;[WCS:&#160;</span><span class="c">俯视图</span><span class="m">]</span></div><div class="a" style="left:70px;top:256px;width:1px;height:16px;background-image:linear-gradient(#000 50%,transparent 50%);background-size:1px 2px"></div><div class="a" style="left:71px;top:264px;width:10px;height:1px;background-image:linear-gradient(to right,#000 50%,transparent 50%);background-size:2px 1px"></div><svg class="a" style="left:81px;top:256px" width="16" height="16" viewBox="0 0 16 16"><path d="M0.5 2.5H6L7 4H15.5V15.5H0.5Z" fill="#C8C8C8" stroke="#000"/><path d="M1 4H6" stroke="#fff"/></svg><div class="a t" style="left:101px;top:256px;"><span class="c">参数</span></div><div class="a" style="left:70px;top:272px;width:1px;height:16px;background-image:linear-gradient(#000 50%,transparent 50%);background-size:1px 2px"></div><div class="a" style="left:71px;top:280px;width:10px;height:1px;background-image:linear-gradient(to right,#000 50%,transparent 50%);background-size:2px 1px"></div><svg class="a" style="left:81px;top:272px" width="16" height="16" viewBox="0 0 16 16"><path d="M4 1H12V11L8 15L4 11Z" fill="#102080" stroke="#000" stroke-width="0.6"/><path d="M5 9L11 3M5 13L11 7" stroke="#C0C8F0" stroke-width="1"/></svg><div class="a t" style="left:101px;top:272px;"><span class="m">#1&#160;-&#160;M12.00&#160;</span><span class="c">平底刀</span><span class="m">&#160;-&#160;K12</span></div><div class="a" style="left:70px;top:288px;width:1px;height:16px;background-image:linear-gradient(#000 50%,transparent 50%);background-size:1px 2px"></div><div class="a" style="left:71px;top:296px;width:10px;height:1px;background-image:linear-gradient(to right,#000 50%,transparent 50%);background-size:2px 1px"></div><svg class="a" style="left:81px;top:288px" width="16" height="16" viewBox="0 0 16 16"><rect x="0" y="0" width="16" height="16" fill="#050505"/><path d="M13.5 1V10Q13.5 14 9.5 14H1" stroke="#60C060" stroke-width="1.5" fill="none"/><path d="M4 3L6 5L4 7L2 5Z" fill="#50B050"/></svg><div class="a t" style="left:101px;top:288px;"><span class="c">图形</span><span class="m">&#160;-&#160;(3)&#160;</span><span class="c">串连</span><span class="m">(s)</span></div><div class="a" style="left:70px;top:304px;width:1px;height:16px;background-image:linear-gradient(#000 50%,transparent 50%);background-size:1px 2px"></div><div class="a" style="left:71px;top:312px;width:10px;height:1px;background-image:linear-gradient(to right,#000 50%,transparent 50%);background-size:2px 1px"></div><svg class="a" style="left:81px;top:304px" width="16" height="16" viewBox="0 0 16 16"><rect x="0" y="0" width="16" height="16" fill="#C8C8C8"/><path d="M0 4Q4 1 8 4T16 4M0 8Q4 5 8 8T16 8M0 12Q4 9 8 12T16 12" stroke="#207878" stroke-width="2" fill="none"/><path d="M0 5.5Q4 2.5 8 5.5T16 5.5M0 9.5Q4 6.5 8 9.5T16 9.5" stroke="#A8D8D8" stroke-width="1" fill="none"/></svg><div class="a t" style="left:101px;top:304px;"><span class="c">刀具路径</span><span class="m">&#160;-&#160;56.2K&#160;-&#160;200E.TXT&#160;-&#160;</span><span class="c">程序号</span></div><div class="a" style="left:70px;top:320px;width:1px;height:9px;background-image:linear-gradient(#000 50%,transparent 50%);background-size:1px 2px"></div><div class="a" style="left:71px;top:328px;width:10px;height:1px;background-image:linear-gradient(to right,#000 50%,transparent 50%);background-size:2px 1px"></div><svg class="a" style="left:81px;top:320px" width="16" height="18" viewBox="0 0 16 18"><rect x="0" y="0" width="16" height="18" fill="#C8C8C8"/><circle cx="3" cy="15" r="4" fill="#10F0F0"/><path d="M5 12L12 7" stroke="#408040" stroke-width="1.5" stroke-dasharray="2 1"/><path d="M11 4L15 1V6Z" fill="#808080"/></svg><div class="a t" style="left:101px;top:320px;"><span class="m">Coolant...&#160;-&#160;</span><span class="c">开</span></div><div class="a" style="left:51px;top:344px;width:10px;height:1px;background-image:linear-gradient(to right,#000 50%,transparent 50%);background-size:2px 1px"></div><div class="a" style="left:46px;top:340px;width:9px;height:9px;background:#fff;border:1px solid #808080"><div class="a" style="left:1px;top:3px;width:5px;height:1px;background:#000"></div></div><svg class="a" style="left:61px;top:335px" width="16" height="16" viewBox="0 0 16 16"><path d="M0.5 2.5H6L7 4H13V14.5H0.5Z" fill="#808030" stroke="#000"/><path d="M2 14.5L4.5 7H16L13 14.5Z" fill="#FFF030" stroke="#000"/></svg><div class="a t" style="left:82px;top:336px;"><span class="m">11&#160;-&#160;2D</span><span class="c">挖槽</span><span class="m">&#160;(</span><span class="c">标准</span><span class="m">)&#160;-&#160;[WCS:&#160;</span><span class="c">俯视图</span><span class="m">]&#160;-&#160;[</span><span class="c">刀</span></div><div class="a" style="left:70px;top:352px;width:1px;height:16px;background-image:linear-gradient(#000 50%,transparent 50%);background-size:1px 2px"></div><div class="a" style="left:71px;top:360px;width:10px;height:1px;background-image:linear-gradient(to right,#000 50%,transparent 50%);background-size:2px 1px"></div><svg class="a" style="left:81px;top:352px" width="16" height="16" viewBox="0 0 16 16"><path d="M0.5 2.5H6L7 4H15.5V15.5H0.5Z" fill="#C8C8C8" stroke="#000"/><path d="M1 4H6" stroke="#fff"/></svg><div class="a t" style="left:101px;top:352px;"><span class="c">参数</span></div><div class="a" style="left:70px;top:368px;width:1px;height:16px;background-image:linear-gradient(#000 50%,transparent 50%);background-size:1px 2px"></div><div class="a" style="left:71px;top:376px;width:10px;height:1px;background-image:linear-gradient(to right,#000 50%,transparent 50%);background-size:2px 1px"></div><svg class="a" style="left:81px;top:368px" width="16" height="16" viewBox="0 0 16 16"><path d="M4 1H12V11L8 15L4 11Z" fill="#102080" stroke="#000" stroke-width="0.6"/><path d="M5 9L11 3M5 13L11 7" stroke="#C0C8F0" stroke-width="1"/></svg><div class="a t" style="left:101px;top:368px;"><span class="m">#1&#160;-&#160;M12.00&#160;</span><span class="c">平底刀</span><span class="m">&#160;-&#160;K12</span></div><div class="a" style="left:70px;top:384px;width:1px;height:16px;background-image:linear-gradient(#000 50%,transparent 50%);background-size:1px 2px"></div><div class="a" style="left:71px;top:392px;width:10px;height:1px;background-image:linear-gradient(to right,#000 50%,transparent 50%);background-size:2px 1px"></div><svg class="a" style="left:81px;top:384px" width="16" height="16" viewBox="0 0 16 16"><rect x="0" y="0" width="16" height="16" fill="#050505"/><path d="M13.5 1V10Q13.5 14 9.5 14H1" stroke="#60C060" stroke-width="1.5" fill="none"/><path d="M4 3L6 5L4 7L2 5Z" fill="#50B050"/></svg><div class="a t" style="left:101px;top:384px;"><span class="c">图形</span><span class="m">&#160;-&#160;(2)&#160;</span><span class="c">串连</span><span class="m">(s)</span></div><div class="a" style="left:70px;top:400px;width:1px;height:16px;background-image:linear-gradient(#000 50%,transparent 50%);background-size:1px 2px"></div><div class="a" style="left:71px;top:408px;width:10px;height:1px;background-image:linear-gradient(to right,#000 50%,transparent 50%);background-size:2px 1px"></div><svg class="a" style="left:81px;top:400px" width="16" height="16" viewBox="0 0 16 16"><rect x="0" y="0" width="16" height="16" fill="#C8C8C8"/><path d="M0 4Q4 1 8 4T16 4M0 8Q4 5 8 8T16 8M0 12Q4 9 8 12T16 12" stroke="#207878" stroke-width="2" fill="none"/><path d="M0 5.5Q4 2.5 8 5.5T16 5.5M0 9.5Q4 6.5 8 9.5T16 9.5" stroke="#A8D8D8" stroke-width="1" fill="none"/></svg><div class="a t" style="left:101px;top:400px;"><span class="c">刀具路径</span><span class="m">&#160;-&#160;9.8K&#160;-&#160;200E.TXT&#160;-&#160;</span><span class="c">程序号</span></div><div class="a" style="left:70px;top:416px;width:1px;height:9px;background-image:linear-gradient(#000 50%,transparent 50%);background-size:1px 2px"></div><div class="a" style="left:71px;top:424px;width:10px;height:1px;background-image:linear-gradient(to right,#000 50%,transparent 50%);background-size:2px 1px"></div><svg class="a" style="left:81px;top:416px" width="16" height="18" viewBox="0 0 16 18"><rect x="0" y="0" width="16" height="18" fill="#C8C8C8"/><circle cx="3" cy="15" r="4" fill="#10F0F0"/><path d="M5 12L12 7" stroke="#408040" stroke-width="1.5" stroke-dasharray="2 1"/><path d="M11 4L15 1V6Z" fill="#808080"/></svg><div class="a t" style="left:101px;top:416px;"><span class="m">Coolant...&#160;-&#160;</span><span class="c">开</span></div><div class="a" style="left:51px;top:440px;width:10px;height:1px;background-image:linear-gradient(to right,#000 50%,transparent 50%);background-size:2px 1px"></div><div class="a" style="left:46px;top:436px;width:9px;height:9px;background:#fff;border:1px solid #808080"><div class="a" style="left:1px;top:3px;width:5px;height:1px;background:#000"></div></div><svg class="a" style="left:61px;top:431px" width="16" height="16" viewBox="0 0 16 16"><path d="M0.5 2.5H6L7 4H13V14.5H0.5Z" fill="#808030" stroke="#000"/><path d="M2 14.5L4.5 7H16L13 14.5Z" fill="#FFF030" stroke="#000"/></svg><div class="a t" style="left:82px;top:432px;"><span class="m">12&#160;-&#160;</span><span class="c">外形铣削</span><span class="m">&#160;(2D)&#160;-&#160;[WCS:&#160;</span><span class="c">俯视图</span><span class="m">]&#160;-&#160;[</span><span class="c">刀</span></div><div class="a" style="left:70px;top:448px;width:1px;height:16px;background-image:linear-gradient(#000 50%,transparent 50%);background-size:1px 2px"></div><div class="a" style="left:71px;top:456px;width:10px;height:1px;background-image:linear-gradient(to right,#000 50%,transparent 50%);background-size:2px 1px"></div><svg class="a" style="left:81px;top:448px" width="16" height="16" viewBox="0 0 16 16"><path d="M0.5 2.5H6L7 4H15.5V15.5H0.5Z" fill="#C8C8C8" stroke="#000"/><path d="M1 4H6" stroke="#fff"/></svg><div class="a t" style="left:101px;top:448px;"><span class="c">参数</span></div><div class="a" style="left:70px;top:464px;width:1px;height:16px;background-image:linear-gradient(#000 50%,transparent 50%);background-size:1px 2px"></div><div class="a" style="left:71px;top:472px;width:10px;height:1px;background-image:linear-gradient(to right,#000 50%,transparent 50%);background-size:2px 1px"></div><svg class="a" style="left:81px;top:464px" width="16" height="16" viewBox="0 0 16 16"><path d="M4 1H12V11L8 15L4 11Z" fill="#102080" stroke="#000" stroke-width="0.6"/><path d="M5 9L11 3M5 13L11 7" stroke="#C0C8F0" stroke-width="1"/></svg><div class="a t" style="left:101px;top:464px;"><span class="m">#1&#160;-&#160;M12.00&#160;</span><span class="c">平底刀</span><span class="m">&#160;-&#160;K12</span></div><div class="a" style="left:70px;top:480px;width:1px;height:16px;background-image:linear-gradient(#000 50%,transparent 50%);background-size:1px 2px"></div><div class="a" style="left:71px;top:488px;width:10px;height:1px;background-image:linear-gradient(to right,#000 50%,transparent 50%);background-size:2px 1px"></div><svg class="a" style="left:81px;top:480px" width="16" height="16" viewBox="0 0 16 16"><rect x="0" y="0" width="16" height="16" fill="#050505"/><path d="M13.5 1V10Q13.5 14 9.5 14H1" stroke="#60C060" stroke-width="1.5" fill="none"/><path d="M4 3L6 5L4 7L2 5Z" fill="#50B050"/></svg><div class="a t" style="left:101px;top:480px;"><span class="c">图形</span><span class="m">&#160;-&#160;(2)&#160;</span><span class="c">串连</span><span class="m">(s)</span></div><div class="a" style="left:70px;top:496px;width:1px;height:16px;background-image:linear-gradient(#000 50%,transparent 50%);background-size:1px 2px"></div><div class="a" style="left:71px;top:504px;width:10px;height:1px;background-image:linear-gradient(to right,#000 50%,transparent 50%);background-size:2px 1px"></div><svg class="a" style="left:81px;top:496px" width="16" height="16" viewBox="0 0 16 16"><rect x="0" y="0" width="16" height="16" fill="#C8C8C8"/><path d="M0 4Q4 1 8 4T16 4M0 8Q4 5 8 8T16 8M0 12Q4 9 8 12T16 12" stroke="#207878" stroke-width="2" fill="none"/><path d="M0 5.5Q4 2.5 8 5.5T16 5.5M0 9.5Q4 6.5 8 9.5T16 9.5" stroke="#A8D8D8" stroke-width="1" fill="none"/></svg><div class="a t" style="left:101px;top:496px;"><span class="c">刀具路径</span><span class="m">&#160;-&#160;691.1K&#160;-&#160;200E.TXT&#160;-&#160;</span><span class="c">程序号</span></div><div class="a" style="left:70px;top:512px;width:1px;height:9px;background-image:linear-gradient(#000 50%,transparent 50%);background-size:1px 2px"></div><div class="a" style="left:71px;top:520px;width:10px;height:1px;background-image:linear-gradient(to right,#000 50%,transparent 50%);background-size:2px 1px"></div><svg class="a" style="left:81px;top:512px" width="16" height="18" viewBox="0 0 16 18"><rect x="0" y="0" width="16" height="18" fill="#C8C8C8"/><circle cx="3" cy="15" r="4" fill="#10F0F0"/><path d="M5 12L12 7" stroke="#408040" stroke-width="1.5" stroke-dasharray="2 1"/><path d="M11 4L15 1V6Z" fill="#808080"/></svg><div class="a t" style="left:101px;top:512px;"><span class="m">Coolant...&#160;-&#160;</span><span class="c">开</span></div><div class="a" style="left:51px;top:536px;width:10px;height:1px;background-image:linear-gradient(to right,#000 50%,transparent 50%);background-size:2px 1px"></div><div class="a" style="left:46px;top:532px;width:9px;height:9px;background:#fff;border:1px solid #808080"><div class="a" style="left:1px;top:3px;width:5px;height:1px;background:#000"></div></div><svg class="a" style="left:61px;top:527px" width="16" height="16" viewBox="0 0 16 16"><path d="M0.5 2.5H6L7 4H13V14.5H0.5Z" fill="#808030" stroke="#000"/><path d="M2 14.5L4.5 7H16L13 14.5Z" fill="#80E080" stroke="#000"/><path d="M6 13L13 5" stroke="#2060C0" stroke-width="2"/></svg><div class="a" style="left:81px;top:528px;width:222px;height:16px;background:#0A246A"></div><div class="a t" style="left:82px;top:528px;color:#fff"><span class="m">13&#160;-&#160;</span><span class="c">外形铣削</span><span class="m">&#160;(2D)&#160;-&#160;[WCS:&#160;</span><span class="c">俯视图</span><span class="m">]&#160;-&#160;[</span><span class="c">刀具面</span></div><div class="a" style="left:70px;top:544px;width:1px;height:16px;background-image:linear-gradient(#000 50%,transparent 50%);background-size:1px 2px"></div><div class="a" style="left:71px;top:552px;width:10px;height:1px;background-image:linear-gradient(to right,#000 50%,transparent 50%);background-size:2px 1px"></div><svg class="a" style="left:81px;top:544px" width="16" height="16" viewBox="0 0 16 16"><path d="M0.5 2.5H6L7 4H15.5V15.5H0.5Z" fill="#C8C8C8" stroke="#000"/><path d="M1 4H6" stroke="#fff"/></svg><div class="a t" style="left:101px;top:544px;"><span class="c">参数</span></div><div class="a" style="left:70px;top:560px;width:1px;height:16px;background-image:linear-gradient(#000 50%,transparent 50%);background-size:1px 2px"></div><div class="a" style="left:71px;top:568px;width:10px;height:1px;background-image:linear-gradient(to right,#000 50%,transparent 50%);background-size:2px 1px"></div><svg class="a" style="left:81px;top:560px" width="16" height="16" viewBox="0 0 16 16"><path d="M4 1H12V11L8 15L4 11Z" fill="#102080" stroke="#000" stroke-width="0.6"/><path d="M5 9L11 3M5 13L11 7" stroke="#C0C8F0" stroke-width="1"/></svg><div class="a t" style="left:101px;top:560px;"><span class="m">#1&#160;-&#160;M12.00&#160;</span><span class="c">平底刀</span><span class="m">&#160;-&#160;K12</span></div><div class="a" style="left:70px;top:576px;width:1px;height:16px;background-image:linear-gradient(#000 50%,transparent 50%);background-size:1px 2px"></div><div class="a" style="left:71px;top:584px;width:10px;height:1px;background-image:linear-gradient(to right,#000 50%,transparent 50%);background-size:2px 1px"></div><svg class="a" style="left:81px;top:576px" width="16" height="16" viewBox="0 0 16 16"><rect x="0" y="0" width="16" height="16" fill="#050505"/><path d="M13.5 1V10Q13.5 14 9.5 14H1" stroke="#60C060" stroke-width="1.5" fill="none"/><path d="M4 3L6 5L4 7L2 5Z" fill="#50B050"/></svg><div class="a t" style="left:101px;top:576px;"><span class="c">图形</span><span class="m">&#160;-&#160;(4)&#160;</span><span class="c">串连</span><span class="m">(s)</span></div><div class="a" style="left:70px;top:592px;width:1px;height:16px;background-image:linear-gradient(#000 50%,transparent 50%);background-size:1px 2px"></div><div class="a" style="left:71px;top:600px;width:10px;height:1px;background-image:linear-gradient(to right,#000 50%,transparent 50%);background-size:2px 1px"></div><svg class="a" style="left:81px;top:592px" width="16" height="16" viewBox="0 0 16 16"><rect x="0" y="0" width="16" height="16" fill="#C8C8C8"/><path d="M0 4Q4 1 8 4T16 4M0 8Q4 5 8 8T16 8M0 12Q4 9 8 12T16 12" stroke="#202020" stroke-width="2" fill="none"/></svg><div class="a t" style="left:101px;top:592px;"><span class="c">刀具路径</span><span class="m">&#160;-&#160;2115.2K&#160;-&#160;200E.TXT&#160;-&#160;</span><span class="c">程序号</span></div><div class="a" style="left:70px;top:608px;width:1px;height:9px;background-image:linear-gradient(#000 50%,transparent 50%);background-size:1px 2px"></div><div class="a" style="left:71px;top:616px;width:10px;height:1px;background-image:linear-gradient(to right,#000 50%,transparent 50%);background-size:2px 1px"></div><svg class="a" style="left:81px;top:608px" width="16" height="18" viewBox="0 0 16 18"><rect x="0" y="0" width="16" height="18" fill="#C8C8C8"/><circle cx="3" cy="15" r="4" fill="#10F0F0"/><path d="M5 12L12 7" stroke="#408040" stroke-width="1.5" stroke-dasharray="2 1"/><path d="M11 4L15 1V6Z" fill="#808080"/></svg><div class="a t" style="left:101px;top:608px;"><span class="m">Coolant...&#160;-&#160;</span><span class="c">开</span></div><div class="a" style="left:51px;top:632px;width:10px;height:1px;background-image:linear-gradient(to right,#000 50%,transparent 50%);background-size:2px 1px"></div><div class="a" style="left:46px;top:628px;width:9px;height:9px;background:#fff;border:1px solid #808080"><div class="a" style="left:1px;top:3px;width:5px;height:1px;background:#000"></div></div><svg class="a" style="left:61px;top:623px" width="16" height="16" viewBox="0 0 16 16"><path d="M0.5 2.5H6L7 4H13V14.5H0.5Z" fill="#808030" stroke="#000"/><path d="M2 14.5L4.5 7H16L13 14.5Z" fill="#FFF030" stroke="#000"/></svg><div class="a t" style="left:82px;top:624px;"><span class="m">14&#160;-&#160;</span><span class="c">曲面精加工等高外形</span><span class="m">&#160;-&#160;[WCS:&#160;</span><span class="c">俯视图</span><span class="m">]</span></div><div class="a" style="left:70px;top:640px;width:1px;height:16px;background-image:linear-gradient(#000 50%,transparent 50%);background-size:1px 2px"></div><div class="a" style="left:71px;top:648px;width:10px;height:1px;background-image:linear-gradient(to right,#000 50%,transparent 50%);background-size:2px 1px"></div><svg class="a" style="left:81px;top:640px" width="16" height="16" viewBox="0 0 16 16"><path d="M0.5 2.5H6L7 4H15.5V15.5H0.5Z" fill="#C8C8C8" stroke="#000"/><path d="M1 4H6" stroke="#fff"/></svg><div class="a t" style="left:101px;top:640px;"><span class="c">参数</span></div><div class="a" style="left:70px;top:656px;width:1px;height:16px;background-image:linear-gradient(#000 50%,transparent 50%);background-size:1px 2px"></div><div class="a" style="left:71px;top:664px;width:10px;height:1px;background-image:linear-gradient(to right,#000 50%,transparent 50%);background-size:2px 1px"></div><svg class="a" style="left:81px;top:656px" width="16" height="16" viewBox="0 0 16 16"><path d="M4 1H12V11L8 15L4 11Z" fill="#102080" stroke="#000" stroke-width="0.6"/><path d="M5 9L11 3M5 13L11 7" stroke="#C0C8F0" stroke-width="1"/></svg><div class="a t" style="left:101px;top:656px;"><span class="m">#1&#160;-&#160;M12.00&#160;</span><span class="c">平底刀</span><span class="m">&#160;-&#160;K12</span></div><div class="a" style="left:70px;top:672px;width:1px;height:9px;background-image:linear-gradient(#000 50%,transparent 50%);background-size:1px 2px"></div><div class="a" style="left:71px;top:680px;width:10px;height:1px;background-image:linear-gradient(to right,#000 50%,transparent 50%);background-size:2px 1px"></div><svg class="a" style="left:81px;top:672px" width="16" height="16" viewBox="0 0 16 16"><rect x="0" y="0" width="16" height="16" fill="#050505"/><path d="M13.5 1V10Q13.5 14 9.5 14H1" stroke="#60C060" stroke-width="1.5" fill="none"/><path d="M4 3L6 5L4 7L2 5Z" fill="#50B050"/></svg><div class="a t" style="left:101px;top:672px;"><span class="c">图形</span><span class="m">&#160;-&#160;(1)&#160;</span><span class="c">串连</span><span class="m">(s)</span></div></div><div class="a" style="left:351px;top:266px;width:16px;height:676px;background-color:#E6E4DE;background-image:repeating-conic-gradient(#D4D0C8 0 25%,#fff 0 50%);background-size:2px 2px"></div><div class="a" style="left:351px;top:266px;width:16px;height:16px;background:#D4D0C8;border-top:1px solid #fff;border-left:1px solid #fff;border-right:1px solid #404040;border-bottom:1px solid #404040;box-shadow:inset -1px -1px 0 #808080"><svg class="a" style="left:4px;top:5px;" width="7" height="4" viewBox="0 0 7 4"><path d="M0 4H7L3.5 0Z" fill="#000"/></svg></div><div class="a" style="left:351px;top:354px;width:16px;height:72px;background:#D4D0C8;border-top:1px solid #fff;border-left:1px solid #fff;border-right:1px solid #404040;border-bottom:1px solid #404040;box-shadow:inset -1px -1px 0 #808080"></div><div class="a" style="left:351px;top:926px;width:16px;height:16px;background:#D4D0C8;border-top:1px solid #fff;border-left:1px solid #fff;border-right:1px solid #404040;border-bottom:1px solid #404040;box-shadow:inset -1px -1px 0 #808080"><svg class="a" style="left:4px;top:6px;" width="7" height="4" viewBox="0 0 7 4"><path d="M0 0H7L3.5 4Z" fill="#000"/></svg></div><div class="a" style="left:48px;top:942px;width:303px;height:16px;background-color:#E6E4DE;background-image:repeating-conic-gradient(#D4D0C8 0 25%,#fff 0 50%);background-size:2px 2px"></div><div class="a" style="left:48px;top:942px;width:16px;height:16px;background:#D4D0C8;border-top:1px solid #fff;border-left:1px solid #fff;border-right:1px solid #404040;border-bottom:1px solid #404040;box-shadow:inset -1px -1px 0 #808080"><svg class="a" style="left:5px;top:4px;" width="4" height="7" viewBox="0 0 4 7"><path d="M4 0V7L0 3.5Z" fill="#000"/></svg></div><div class="a" style="left:64px;top:942px;width:157px;height:16px;background:#D4D0C8;border-top:1px solid #fff;border-left:1px solid #fff;border-right:1px solid #404040;border-bottom:1px solid #404040;box-shadow:inset -1px -1px 0 #808080"></div><div class="a" style="left:335px;top:942px;width:16px;height:16px;background:#D4D0C8;border-top:1px solid #fff;border-left:1px solid #fff;border-right:1px solid #404040;border-bottom:1px solid #404040;box-shadow:inset -1px -1px 0 #808080"><svg class="a" style="left:6px;top:4px;" width="4" height="7" viewBox="0 0 4 7"><path d="M0 0V7L4 3.5Z" fill="#000"/></svg></div><div class="a" style="left:351px;top:942px;width:16px;height:16px;background:#D4D0C8"></div><div class="a" style="left:0px;top:965px;width:375px;height:1px;background:#808080"></div><div class="a" style="left:0px;top:966px;width:375px;height:1px;background:#fff"></div><div class="a" style="left:375px;top:154px;width:874px;height:812px;background:#000;overflow:hidden"><svg class="a" style="left:0px;top:0px;" width="874" height="812" viewBox="0 0 874 812"><defs><linearGradient id="hg" x1="0" x2="1"><stop offset="0" stop-color="#004800"/><stop offset="0.45" stop-color="#007000"/><stop offset="1" stop-color="#004000"/></linearGradient><linearGradient id="bs" x1="0" x2="1"><stop offset="0" stop-color="#005000"/><stop offset="0.3" stop-color="#006800"/><stop offset="1" stop-color="#004A00"/></linearGradient></defs><line x1="456" y1="0" x2="456" y2="186" stroke="#A86C28" stroke-width="1.2"/><line x1="0" y1="208" x2="75" y2="251" stroke="#A86C28" stroke-width="1"/><line x1="0" y1="734" x2="304" y2="559" stroke="#A86C28" stroke-width="1"/><line x1="874" y1="229" x2="720" y2="317" stroke="#A86C28" stroke-width="1"/><line x1="706" y1="616" x2="874" y2="713" stroke="#A86C28" stroke-width="1"/><line x1="456" y1="654" x2="456" y2="812" stroke="#A86C28" stroke-width="1"/><polyline points="369,175 410,151 455,177" fill="none" stroke="#C82828" stroke-width="1" /><polyline points="775,366 807,384 765,406" fill="none" stroke="#C82828" stroke-width="1" /><polygon points="22,283 580,605 580,687 503,643 499,643 476,657 107,445 107,415 22,366" fill="#005A00"/><polygon points="22,283 107,332 107,415 22,366" fill="#005600"/><polygon points="503,562 580,605 580,687 503,643" fill="#005000"/><polygon points="476,545 503,562 503,643 476,657" fill="#005400"/><line x1="487" y1="554" x2="487" y2="650" stroke="#004A00" stroke-width="2"/><polygon points="580,605 765,499 765,582 580,687" fill="#004800"/><path d="M 775 361 L 783 370 L 783 472 Q 780 491 765 499 L 683 452 L 695 416 Z" fill="#004800"/><path d="M 22 283 L 208 177 L 299 230 L 397 176 Q 434 153 472 175 L 765 343 Q 798 362 775 380 L 705 421 L 687 452 L 765 499 L 580 605 L 505 562 L 476 555 L 130 355 L 123 342 Z" fill="#007C00"/><polyline points="130,355 476,554" fill="none" stroke="#28B028" stroke-width="2.5" /><polyline points="135,362 476,559" fill="none" stroke="#005A00" stroke-width="3" /><path d="M 262 388 A200 116 0 1 1 650 388 A200 116 0 0 0 262 388 Z" fill="#005600"/><path d="M325 356 V393 A129 74 0 0 0 583 393 V356 Z" fill="url(#bs)"/><path d="M326 370 A129 74 0 0 0 582 370" stroke="#30A030" stroke-width="1" fill="none" opacity="0.8"/><path d="M326 380 A129 74 0 0 0 582 380" stroke="#30A030" stroke-width="1" fill="none" opacity="0.8"/><path d="M326 390 A129 74 0 0 0 582 390" stroke="#30A030" stroke-width="1" fill="none" opacity="0.8"/><ellipse cx="454" cy="356" rx="129" ry="74" fill="#006E00" /><path d="M340 396 A129 74 0 0 0 475 430" stroke="#40C040" stroke-width="3" fill="none" opacity="0.85"/><ellipse cx="456" cy="353" rx="122" ry="69" fill="#007E00" /><ellipse cx="456" cy="354" rx="23" ry="13" fill="#005000" stroke="#C83818" stroke-width="1"/><polyline points="266,376 470,496" fill="none" stroke="#B04020" stroke-width="1" /><polyline points="505,254 650,338" fill="none" stroke="#B04020" stroke-width="1" /><ellipse cx="388" cy="221" rx="37" ry="20" fill="url(#hg)" /><path d="M369 218 V236 A19 6 0 0 0 407 236 V218 A19 6 0 0 0 369 218 Z" fill="#00FFFF"/><ellipse cx="223" cy="314" rx="37" ry="20" fill="url(#hg)" /><path d="M204 311 V329 A19 6 0 0 0 242 329 V311 A19 6 0 0 0 204 311 Z" fill="#00FFFF"/><ellipse cx="688" cy="391" rx="37" ry="20" fill="url(#hg)" /><path d="M669 388 V406 A19 6 0 0 0 707 406 V388 A19 6 0 0 0 669 388 Z" fill="#00FFFF"/><ellipse cx="522" cy="488" rx="37" ry="20" fill="url(#hg)" /><path d="M503 485 V503 A19 6 0 0 0 541 503 V485 A19 6 0 0 0 503 485 Z" fill="#00FFFF"/><ellipse cx="291" cy="258" rx="17" ry="10" fill="url(#hg)" /><ellipse cx="610" cy="454" rx="17" ry="10" fill="url(#hg)" /><ellipse cx="208" cy="226" rx="20" ry="12" fill="url(#hg)" stroke="#C04010" stroke-width="1.2"/><ellipse cx="95" cy="289" rx="20" ry="12" fill="url(#hg)" stroke="#C04010" stroke-width="1.2"/><ellipse cx="676" cy="493" rx="20" ry="12" fill="url(#hg)" stroke="#C04010" stroke-width="1.2"/><ellipse cx="562" cy="559" rx="20" ry="12" fill="url(#hg)" stroke="#C04010" stroke-width="1.2"/><ellipse cx="148" cy="256" rx="31" ry="19" fill="url(#hg)" /><path d="M118 258 A31 19 0 0 0 178 258" stroke="#1010C0" stroke-width="4" fill="none"/><ellipse cx="148" cy="256" rx="31" ry="19" fill="none" stroke="#1818D0" stroke-width="2"/><ellipse cx="623" cy="526" rx="31" ry="19" fill="url(#hg)" /><path d="M593 528 A31 19 0 0 0 653 528" stroke="#1010C0" stroke-width="4" fill="none"/><ellipse cx="623" cy="526" rx="31" ry="19" fill="none" stroke="#1818D0" stroke-width="2"/><polygon points="58,343 439,124 853,363 472,582" fill="none" stroke="#1818C8" stroke-width="1"/><polyline points="61,342 345,178" fill="none" stroke="#1818D0" stroke-width="2.5" /><path d="M 71 336 L 125 367 Q 139 374 139 364 L 131 346 Q 123 330 145 318 L 327 203 Q 335 206 329 213 L 302 229" fill="none" stroke="#2020C8" stroke-width="1.5"/><path d="M 77 334 L 125 361 Q 133 365 132 358 L 127 346 Q 119 332 142 321 L 325 207" fill="none" stroke="#2020C8" stroke-width="1"/><path d="M426 542L435 535L485 543L530 530L705 427L721 430L723 438L715 444L495 572L475 577L431 549L426 542" fill="none" stroke="#1818D0" stroke-width="2"/><polyline points="437,543 485,549 530,537 710,434" fill="none" stroke="#3030C8" stroke-width="1" /><polyline points="440,548 475,568 493,567 717,438" fill="none" stroke="#3030C8" stroke-width="1" stroke-dasharray="2 1"/><polyline points="473,181 765,351 770,358 764,356" fill="none" stroke="#2828C0" stroke-width="1" /><polyline points="470,180 763,349" fill="none" stroke="#006A00" stroke-width="2" /><polyline points="130,347 430,520" fill="none" stroke="#2020C0" stroke-width="1" /><polyline points="140,346 470,536" fill="none" stroke="#2020A0" stroke-width="1" stroke-dasharray="1 2"/><polyline points="105,328 146,304" fill="none" stroke="#C03018" stroke-width="1" /><polyline points="105,328 165,364" fill="none" stroke="#C03018" stroke-width="1" /><polyline points="505,558 545,536" fill="none" stroke="#C03018" stroke-width="1" /><polyline points="388,226 388,123 223,219 223,319" fill="none" stroke="#F4F4A0" stroke-width="1" /><polyline points="223,219 688,296 688,396" fill="none" stroke="#F4F4A0" stroke-width="1" /><polyline points="688,296 522,391 522,493" fill="none" stroke="#F4F4A0" stroke-width="1" /><line x1="456" y1="0" x2="456" y2="354" stroke="#A86C28" stroke-width="1.2"/><line x1="580" y1="687" x2="765" y2="582" stroke="#1818B0" stroke-width="1"/><line x1="503" y1="644" x2="580" y2="687" stroke="#1818B0" stroke-width="1"/><polyline points="285,216 325,239" fill="none" stroke="#C82828" stroke-width="1" /></svg></div><svg class="a" style="left:400px;top:890px;" width="50" height="55" viewBox="0 0 50 55"><path d="M17 36V12" stroke="#2020E0"/><path d="M17 36L32 28" stroke="#20A020"/><path d="M17 36L32 45" stroke="#E02020"/></svg><div class="a vtb" style="left:411px;top:893px;color:#2020F0">Z</div><div class="a vtb" style="left:432px;top:904px;color:#20A020">Y</div><div class="a vtb" style="left:432px;top:929px;color:#F02020">X</div><div class="a t vt" style="left:383px;top:943px;"><span class="c">屏幕视角</span><span class="m">:</span><span class="c">等视图</span></div><div class="a t vt" style="left:501px;top:943px;"><span class="m">WCS:</span><span class="c">俯视图</span></div><div class="a t vt" style="left:590px;top:943px;"><span class="c">刀具</span><span class="m">/</span><span class="c">绘图平面</span><span class="m">:</span><span class="c">俯视图</span></div><svg class="a" style="left:1128px;top:928px;" width="100" height="28" viewBox="0 0 100 28"><path d="M1.5 2V26M97.5 3V26M1.5 14H97.5" stroke="#F0F0A0" fill="none"/></svg><div class="a vtb" style="left:1165px;top:928px;color:#1818E0">32.821</div><div class="a t vt" style="left:1154px;top:942px;"><span class="c">公制</span></div><div class="a" style="left:1249px;top:154px;width:31px;height:812px;border-left:1px solid #fff"></div><div class="a" style="left:1254px;top:157px;width:23px;height:3px;border-left:1px solid #fff;border-top:1px solid #fff;border-right:1px solid #808080;border-bottom:1px solid #808080"></div><div class="a" style="left:1250px;top:389px;width:30px;height:1px;background:#808080"></div><div class="a" style="left:1250px;top:390px;width:30px;height:1px;background:#fff"></div><div class="a" style="left:1250px;top:392px;width:30px;height:1px;background:#808080"></div><div class="a" style="left:1250px;top:393px;width:30px;height:1px;background:#fff"></div><div class="a" style="left:1254px;top:397px;width:23px;height:3px;border-left:1px solid #fff;border-top:1px solid #fff;border-right:1px solid #808080;border-bottom:1px solid #808080"></div><svg class="a" style="left:1257px;top:167px" width="16" height="16" viewBox="0 0 16 16"><path d="M8 0L12 4H10V6H12V4L16 8L12 12V10H10V12H12L8 16L4 12H6V10H4V12L0 8L4 4V6H6V4H4Z" fill="#1060D0"/><rect x="5.5" y="5.5" width="5" height="5" fill="#A0C8F0"/></svg><svg class="a" style="left:1257px;top:189px" width="16" height="16" viewBox="0 0 16 16"><rect x="1.5" y="1.5" width="13" height="13" fill="none" stroke="#203060" stroke-dasharray="1 1"/><circle cx="9" cy="7" r="4" fill="#D0E8FF" stroke="#4060A0"/><path d="M7 7H11" stroke="#E02020" stroke-width="1.5"/><path d="M6 10L2 14" stroke="#E0A020" stroke-width="2.5"/></svg><svg class="a" style="left:1257px;top:211px" width="16" height="16" viewBox="0 0 16 16"><rect x="1.5" y="1.5" width="13" height="13" fill="none" stroke="#203060" stroke-dasharray="1 1"/><circle cx="9" cy="7" r="4" fill="#D0E8FF" stroke="#4060A0"/><path d="M7 7H11M9 5V9" stroke="#E02020" stroke-width="1.5"/><path d="M6 10L2 14" stroke="#E0A020" stroke-width="2.5"/></svg><svg class="a" style="left:1257px;top:233px" width="16" height="16" viewBox="0 0 16 16"><rect width="16" height="16" fill="#101820"/><path d="M0 5Q4 2 8 5T16 5M0 9Q4 6 8 9T16 9M0 13Q4 10 8 13T16 13" stroke="#60C0E0" stroke-width="1.5" fill="none"/><path d="M10 1H16V5" fill="#fff"/></svg><svg class="a" style="left:1257px;top:256px" width="16" height="16" viewBox="0 0 16 16"><path d="M8 1L15 4V12L8 15L1 12V4Z" fill="none" stroke="#608020" stroke-width="1.2"/><path d="M1 4L8 7L15 4M8 7V15" stroke="#608020" fill="none" stroke-width="1.2"/></svg><svg class="a" style="left:1257px;top:278px" width="16" height="16" viewBox="0 0 16 16"><path d="M8 1L15 4V12L8 15L1 12V4Z" fill="#70B030" stroke="#406010" stroke-width="1.2"/><path d="M1 4L8 7L15 4M8 7V15" stroke="#406010" fill="none"/></svg><svg class="a" style="left:1257px;top:299px" width="16" height="16" viewBox="0 0 16 16"><path d="M2 4L8 1L14 4V12L8 15L2 12Z" fill="#F060E0" stroke="#802080"/><path d="M2 4L8 7L14 4M8 7V15" stroke="#fff" fill="none"/></svg><svg class="a" style="left:1257px;top:322px" width="16" height="16" viewBox="0 0 16 16"><rect x="1" y="1" width="10" height="10" fill="#5060C0"/><rect x="5" y="5" width="10" height="10" fill="#4050B0"/><rect x="7" y="6" width="6" height="4" fill="#E8E8F8"/></svg><svg class="a" style="left:1257px;top:344px" width="16" height="16" viewBox="0 0 16 16"><path d="M1 5H6L7 6H13V14H1Z" fill="#F0C020" stroke="#A08000"/><path d="M2 14L4 8H15L13 14Z" fill="#FFE060" stroke="#A08000"/><path d="M6 7Q8 2 13 3" stroke="#10A020" stroke-width="2.5" fill="none"/><path d="M12 0L15 3L11 5Z" fill="#10A020"/></svg><svg class="a" style="left:1257px;top:366px" width="16" height="16" viewBox="0 0 16 16"><rect x="1.5" y="1.5" width="13" height="13" fill="#4050B0" stroke="#283080"/><rect x="4" y="2" width="8" height="5" fill="#E8E8F8"/><rect x="5" y="10" width="6" height="4" fill="#fff"/><rect x="6" y="11" width="2" height="3" fill="#283080"/></svg><svg class="a" style="left:1257px;top:407px" width="16" height="16" viewBox="0 0 16 16"><path d="M2 3V15M14 3V15M3 9H13M5 7L3 9L5 11M11 7L13 9L11 11" stroke="#506080" stroke-width="1.5" fill="none"/><path d="M3 7L9 1" stroke="#F0C020" stroke-width="1.5"/></svg><svg class="a" style="left:1257px;top:429px" width="16" height="16" viewBox="0 0 16 16"><path d="M2 14Q4 4 10 3Q15 4 14 12L10 10L6 14Z" fill="#C8E0F8" stroke="#D02020" stroke-width="1.5"/><path d="M3 7L9 1" stroke="#F0C020" stroke-width="1.5"/></svg><svg class="a" style="left:1257px;top:451px" width="16" height="16" viewBox="0 0 16 16"><path d="M6 3H11V6H15V11H11V15H6V11H2V6H6Z" fill="#30B030"/><path d="M2 8L9 1" stroke="#F0C020" stroke-width="1.5"/></svg><svg class="a" style="left:1257px;top:473px" width="16" height="16" viewBox="0 0 16 16"><path d="M4 13L13 4" stroke="#209020" stroke-width="1.5"/><path d="M0 13H6M3 10V16M10 3H16M13 0V6" stroke="#506080"/><path d="M2 8L9 1" stroke="#F0C020" stroke-width="1.5"/></svg><svg class="a" style="left:1257px;top:495px" width="16" height="16" viewBox="0 0 16 16"><circle cx="8" cy="9" r="6" fill="none" stroke="#209020" stroke-width="1.5"/><path d="M2 8L9 1" stroke="#F0C020" stroke-width="1.5"/></svg><svg class="a" style="left:1257px;top:517px" width="16" height="16" viewBox="0 0 16 16"><path d="M3 15V9H13V3" stroke="#109010" stroke-width="2.5" fill="none"/><path d="M2 8L9 1" stroke="#F0C020" stroke-width="1.5"/></svg><svg class="a" style="left:1257px;top:539px" width="16" height="16" viewBox="0 0 16 16"><rect x="2" y="2" width="12" height="12" fill="none" stroke="#E04020" stroke-width="2.5"/><path d="M8 2V14M2 8H14" stroke="#E04020" stroke-width="2"/></svg><svg class="a" style="left:1257px;top:561px" width="16" height="16" viewBox="0 0 16 16"><path d="M4 6L10 3L15 6V13L9 16L4 13Z" fill="#2080E0"/><path d="M4 6L9 9L15 6L10 3Z" fill="#80C8FF"/><path d="M2 8L9 1" stroke="#F0C020" stroke-width="1.5"/></svg><svg class="a" style="left:1257px;top:583px" width="16" height="16" viewBox="0 0 16 16"><circle cx="8" cy="8" r="6.5" fill="#E0ECFF" stroke="#2050B0" stroke-width="1.5"/><ellipse cx="8" cy="8" rx="3" ry="6.5" fill="none" stroke="#2050B0"/><path d="M1.5 8H14.5M3 4.5H13M3 11.5H13" stroke="#2050B0"/></svg><svg class="a" style="left:1257px;top:605px" width="16" height="16" viewBox="0 0 16 16"><circle cx="8" cy="8" r="6.5" fill="none" stroke="#808080" stroke-width="2.5"/><path d="M4 12L12 4" stroke="#808080" stroke-width="2.5"/></svg><svg class="a" style="left:1257px;top:634px" width="16" height="16" viewBox="0 0 16 16"><rect x="2" y="9" width="6" height="6" fill="#808080" stroke="#303030"/><rect x="9" y="2" width="6" height="6" fill="#8020F0"/><path d="M2 7L8 1" stroke="#F0C020" stroke-width="1.5"/></svg><svg class="a" style="left:1257px;top:657px" width="16" height="16" viewBox="0 0 16 16"><rect x="2" y="9" width="6" height="6" fill="#D01030"/><rect x="9" y="2" width="6" height="6" fill="#808080" stroke="#303030"/><path d="M2 7L8 1" stroke="#F0C020" stroke-width="1.5"/></svg><svg class="a" style="left:1257px;top:678px" width="16" height="16" viewBox="0 0 16 16"><rect x="2" y="2" width="5" height="13" fill="none" stroke="#802080" stroke-width="1.5"/><path d="M8 14L14 6M11 5H15V9" stroke="#30A030" stroke-width="2" fill="none"/></svg><svg class="a" style="left:1257px;top:708px" width="16" height="16" viewBox="0 0 16 16"><rect x="3" y="5" width="4" height="4" fill="#E02020"/><rect x="7" y="5" width="4" height="4" fill="#20C020"/><rect x="11" y="5" width="4" height="4" fill="#F0F020"/><rect x="3" y="9" width="4" height="4" fill="#2020E0"/><rect x="7" y="9" width="4" height="4" fill="#E020E0"/><rect x="11" y="9" width="4" height="4" fill="#20E0E0"/><path d="M1 7L7 1" stroke="#F0C020" stroke-width="1.5"/></svg><svg class="a" style="left:1257px;top:732px" width="16" height="16" viewBox="0 0 16 16"><rect x="2" y="3" width="13" height="12" fill="#fff" stroke="#202020" stroke-width="1.5"/><rect x="2" y="3" width="13" height="5" fill="#F0D060"/><path d="M1 7L7 1" stroke="#E04020" stroke-width="1.5"/></svg><div class="a" style="left:1254px;top:628px;width:24px;height:1px;background:#808080"></div><div class="a" style="left:1254px;top:629px;width:24px;height:1px;background:#fff"></div><div class="a" style="left:1254px;top:702px;width:24px;height:1px;background:#808080"></div><div class="a" style="left:1254px;top:703px;width:24px;height:1px;background:#fff"></div><div class="a" style="left:1254px;top:755px;width:24px;height:1px;background:#808080"></div><div class="a" style="left:1254px;top:756px;width:24px;height:1px;background:#fff"></div><div class="a" style="left:1250px;top:763px;width:30px;height:1px;background:#808080"></div><div class="a" style="left:1250px;top:764px;width:30px;height:1px;background:#fff"></div><div class="a t" style="left:2px;top:972px;"><span class="c">帮助</span><span class="m">,&#160;</span><span class="c">按</span><span class="m">&#160;Alt+H</span><span class="c">。</span></div><div class="a" style="left:0px;top:995px;width:1280px;height:1px;background:#fff"></div><div class="a" style="left:360px;top:970px;width:30px;height:23px;background:#D4D0C8;border-top:1px solid #808080;border-left:1px solid #808080;border-bottom:1px solid #fff;border-right:1px solid #fff"><div class="a t" style="left:8px;top:2px;"><span class="m">3D</span></div></div><div class="a" style="left:392px;top:970px;width:78px;height:23px;background:#D4D0C8;border-top:1px solid #808080;border-left:1px solid #808080;border-bottom:1px solid #fff;border-right:1px solid #fff"><div class="a t" style="left:14px;top:2px;"><span class="c">屏幕视角</span></div></div><div class="a" style="left:471px;top:970px;width:31px;height:23px;background:#D4D0C8;border-top:1px solid #808080;border-left:1px solid #808080;border-bottom:1px solid #fff;border-right:1px solid #fff"><div class="a t" style="left:3px;top:2px;"><span class="c">平面</span></div></div><div class="a" style="left:504px;top:970px;width:19px;height:23px;background:#D4D0C8;border-top:1px solid #808080;border-left:1px solid #808080;border-bottom:1px solid #fff;border-right:1px solid #fff"><div class="a t" style="left:3px;top:0px;"><span class="m">Z</span></div></div><div class="a" style="left:523px;top:971px;width:111px;height:21px;background:#FFFF90;border-top:1px solid #808080;border-left:1px solid #808080;border-right:1px solid #fff;border-bottom:1px solid #fff;box-shadow:inset 1px 1px 0 #404040"><div class="a" style="left:2px;top:2px;width:19px;height:14px;background:#0A246A"></div><div class="a t" style="left:3px;top:0px;color:#fff"><span class="m">0.0</span></div><div class="a" style="left:94px;top:2px;width:14px;height:16px;background:#D4D0C8;border-top:1px solid #fff;border-left:1px solid #fff;border-right:1px solid #404040;border-bottom:1px solid #404040;box-shadow:inset -1px -1px 0 #808080"><svg class="a" style="left:3px;top:5px;" width="7" height="4" viewBox="0 0 7 4"><path d="M0 0H7L3.5 4Z" fill="#000"/></svg></div></div><div class="a" style="left:639px;top:971px;width:54px;height:21px;background:#0000FF;border:1px solid #808080"><div class="a t" style="left:22px;top:2px;color:#0000A0"><span class="m">9</span></div></div><svg class="a" style="left:697px;top:976px;" width="9" height="9" viewBox="0 0 9 9"><path d="M0 1H9L4.5 9Z" fill="#000"/></svg><div class="a" style="left:713px;top:970px;width:36px;height:23px;background:#D4D0C8;border-top:1px solid #808080;border-left:1px solid #808080;border-bottom:1px solid #fff;border-right:1px solid #fff"><div class="a t" style="left:3px;top:2px;"><span class="c">层别</span></div></div><div class="a" style="left:749px;top:971px;width:159px;height:21px;background:#fff;border-top:1px solid #808080;border-left:1px solid #808080;border-right:1px solid #fff;border-bottom:1px solid #fff;box-shadow:inset 1px 1px 0 #404040"><div class="a t" style="left:1px;top:2px;"><span class="m">8</span></div><div class="a" style="left:141px;top:2px;width:15px;height:16px;background:#D4D0C8;border-top:1px solid #fff;border-left:1px solid #fff;border-right:1px solid #404040;border-bottom:1px solid #404040;box-shadow:inset -1px -1px 0 #808080"><svg class="a" style="left:4px;top:5px;" width="7" height="4" viewBox="0 0 7 4"><path d="M0 0H7L3.5 4Z" fill="#000"/></svg></div></div><div class="a" style="left:913px;top:970px;width:40px;height:23px;background:#D4D0C8;border-top:1px solid #808080;border-left:1px solid #808080;border-bottom:1px solid #fff;border-right:1px solid #fff"><div class="a t" style="left:7px;top:2px;"><span class="c">属性</span></div></div><div class="a" style="left:957px;top:971px;width:32px;height:21px;background:#fff;border-top:1px solid #808080;border-left:1px solid #808080;border-right:1px solid #fff;border-bottom:1px solid #fff;box-shadow:inset 1px 1px 0 #404040"><div class="a" style="left:3px;top:2px;font:18px/18px 'Liberation Sans'">*</div><div class="a" style="left:16px;top:2px;width:14px;height:16px;background:#D4D0C8;border-top:1px solid #fff;border-left:1px solid #fff;border-right:1px solid #404040;border-bottom:1px solid #404040;box-shadow:inset -1px -1px 0 #808080"><svg class="a" style="left:3px;top:5px;" width="7" height="4" viewBox="0 0 7 4"><path d="M0 0H7L3.5 4Z" fill="#000"/></svg></div></div><div class="a" style="left:995px;top:971px;width:62px;height:21px;background:#fff;border-top:1px solid #808080;border-left:1px solid #808080;border-right:1px solid #fff;border-bottom:1px solid #fff;box-shadow:inset 1px 1px 0 #404040"><div class="a" style="left:3px;top:8px;width:40px;height:3px;background:#000"></div><div class="a" style="left:45px;top:2px;width:14px;height:16px;background:#D4D0C8;border-top:1px solid #fff;border-left:1px solid #fff;border-right:1px solid #404040;border-bottom:1px solid #404040;box-shadow:inset -1px -1px 0 #808080"><svg class="a" style="left:3px;top:5px;" width="7" height="4" viewBox="0 0 7 4"><path d="M0 0H7L3.5 4Z" fill="#000"/></svg></div></div><div class="a" style="left:1062px;top:971px;width:63px;height:21px;background:#fff;border-top:1px solid #808080;border-left:1px solid #808080;border-right:1px solid #fff;border-bottom:1px solid #fff;box-shadow:inset 1px 1px 0 #404040"><div class="a" style="left:46px;top:2px;width:14px;height:16px;background:#D4D0C8;border-top:1px solid #fff;border-left:1px solid #fff;border-right:1px solid #404040;border-bottom:1px solid #404040;box-shadow:inset -1px -1px 0 #808080"></div></div><div class="a" style="left:1130px;top:970px;width:48px;height:23px;background:#D4D0C8;border-top:1px solid #808080;border-left:1px solid #808080;border-bottom:1px solid #fff;border-right:1px solid #fff"><div class="a t" style="left:12px;top:2px;"><span class="m">WCS</span></div></div><div class="a" style="left:1180px;top:970px;width:54px;height:23px;background:#D4D0C8;border-top:1px solid #808080;border-left:1px solid #808080;border-bottom:1px solid #fff;border-right:1px solid #fff"><div class="a t" style="left:14px;top:2px;"><span class="c">群组</span></div></div><div class="a" style="left:1236px;top:970px;width:23px;height:23px;background:#D4D0C8;border-top:1px solid #808080;border-left:1px solid #808080;border-bottom:1px solid #fff;border-right:1px solid #fff"><div class="a t" style="left:8px;top:2px;"><span class="m">.</span></div></div><div class="a" style="left:1261px;top:970px;width:19px;height:23px;background:#D4D0C8;border-top:1px solid #808080;border-left:1px solid #808080;border-bottom:1px solid #fff;border-right:1px solid #fff"><div class="a t" style="left:5px;top:2px;"><span class="m">?</span></div></div><div class="a wm" style="left:1061px;top:975px"><span style="font-size:16px">三维网</span>www.3dportal.cn</div></body></html>
